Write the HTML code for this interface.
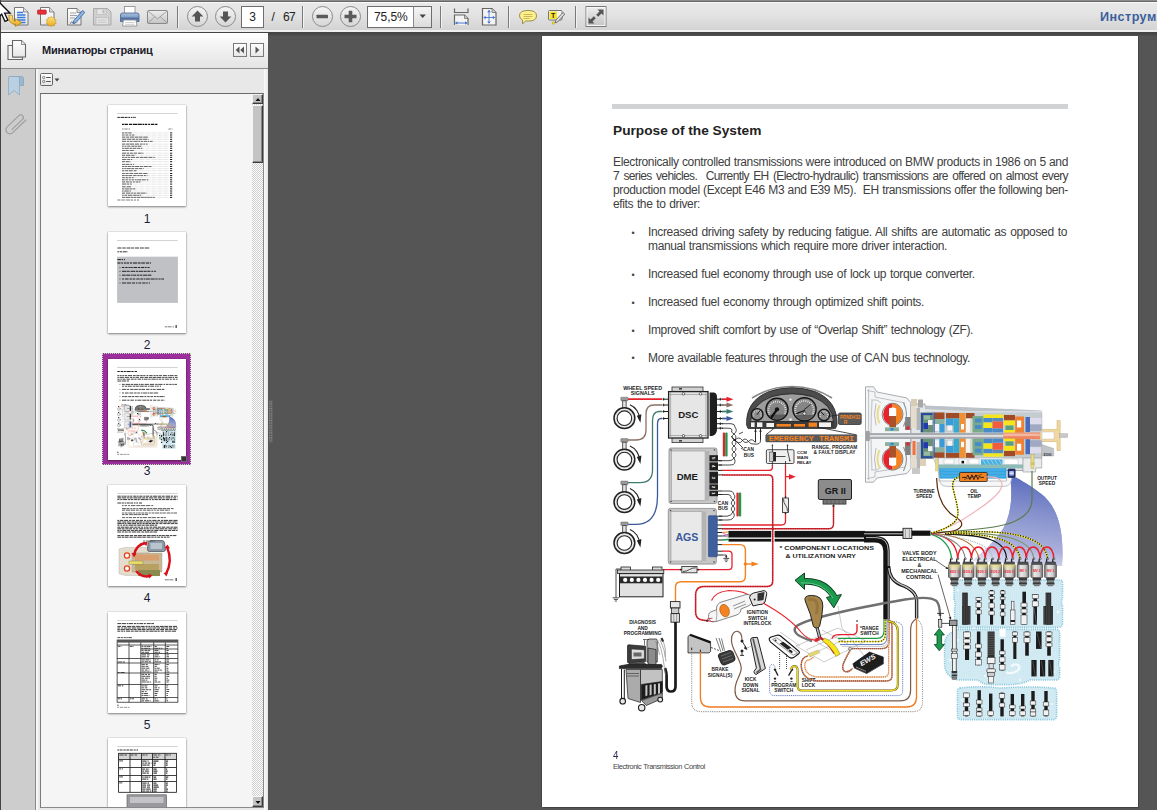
<!DOCTYPE html>
<html lang="ru">
<head>
<meta charset="utf-8">
<title>Electronic Transmission Control</title>
<style>
*{box-sizing:border-box;margin:0;padding:0}
html,body{width:1157px;height:810px;overflow:hidden}
body{position:relative;background:#555;font-family:"Liberation Sans",sans-serif;color:#222}
.abs{position:absolute}
/* toolbar */
#tb{position:absolute;left:0;top:0;width:1157px;height:33px;background:linear-gradient(#e9e9e9 0,#e4e4e4 40%,#d2d2d2 100%);border-top:1px solid #8e8e8e;border-bottom:1px solid #444}
#tb:before{content:"";position:absolute;left:0;top:0;width:100%;height:1px;background:#666}
#tb:after{content:"";position:absolute;left:0;top:1px;width:100%;height:1px;background:#fafafa}
#tbl{position:absolute;left:0;top:29px;width:100%;height:2px;background:#efefef}
.sep{position:absolute;top:5px;width:1px;height:22px;background:#7a7a7a;box-shadow:1px 0 0 #f2f2f2}
.circ{position:absolute;top:5px;width:21px;height:21px;border-radius:50%;border:1px solid #8a8a8a;background:linear-gradient(#f4f4f4,#d6d6d6)}
.inp{position:absolute;background:#fff;border:1px solid #6e6e6e;font-size:12px;line-height:20px;color:#222}
#shadow{position:absolute;left:268px;top:33px;width:889px;height:3px;background:linear-gradient(#444,#505050)}
/* panel */
#ph{position:absolute;left:1px;top:33px;width:267px;height:36px;background:linear-gradient(#fff 0,#f4f4f4 35%,#e4e4e4 100%);border-bottom:1px solid #8c8c8c}
#ledge{position:absolute;left:0;top:0;width:1px;height:810px;background:#444}
#icol{position:absolute;left:1px;top:69px;width:35px;height:741px;background:#cdcdcd;border-right:1px solid #8a8a8a}
#pbody{position:absolute;left:36px;top:69px;width:232px;height:741px;background:#e8e8e8;border-left:2px solid #f6f6f6}
#list{position:absolute;left:40px;top:93px;width:224px;height:715px;background:#f5f5f5;border:1px solid #8a8a8a;border-top-color:#6a6a6a;border-left-color:#7a7a7a;overflow:hidden}
.th{position:absolute;left:67px;width:78px;height:101px;background:#fff;box-shadow:0 1px 2px rgba(0,0,0,.45),0 0 1px rgba(0,0,0,.3)}
.tl{position:absolute;left:86px;width:40px;text-align:center;font-size:12px;line-height:12px;color:#1c1c3a}
.sbb{width:11px;background:#c4c4c4;border-top:1px solid #f4f4f4;border-left:1px solid #f4f4f4;border-right:1px solid #3c3c3c;border-bottom:1px solid #3c3c3c;box-shadow:inset -1px -1px 0 #888}
/* page */
#page{position:absolute;left:542px;top:36px;width:596px;height:771px;background:#fff;box-shadow:-1px 0 0 #444,1px 1px 0 #444}
.t{position:absolute;white-space:nowrap;color:#404040;font-size:12px;line-height:14px;letter-spacing:-0.36px}
.j{text-align:justify;text-align-last:justify;white-space:normal}
</style>
</head>
<body>
<div id="tb"><div id="tbl"></div>
 <div class="sep" style="left:177px"></div>
 <div class="circ" style="left:187px"></div>
 <div class="circ" style="left:215px"></div>
 <div class="inp" style="left:241px;top:5px;width:23px;height:22px;text-align:center">3</div>
 <div class="abs" style="left:271.5px;top:9px;font-size:12px;line-height:14px;color:#222">/</div>
 <div class="abs" style="left:283px;top:9px;font-size:12px;line-height:14px;color:#222;letter-spacing:-0.6px">67</div>
 <div class="sep" style="left:302px"></div>
 <div class="circ" style="left:312px"></div>
 <div class="circ" style="left:340px"></div>
 <div class="inp" style="left:367px;top:5px;width:65px;height:22px;padding-left:6px;letter-spacing:-0.1px">75,5%</div>
 <div class="abs" style="left:413px;top:6px;width:18px;height:20px;border-left:1px solid #8a8a8a;background:linear-gradient(#f4f4f4,#dcdcdc)"></div>
 <div class="sep" style="left:440px"></div>
 <div class="sep" style="left:508px"></div>
 <div class="sep" style="left:575px"></div>
 <div class="abs" style="left:1100px;top:7.5px;font-size:12.6px;line-height:16px;font-weight:bold;color:#3b5f9b;white-space:nowrap;letter-spacing:.45px">Инструменты</div>
</div>
<div id="shadow"></div>
<div id="ledge"></div>
<div id="ph">
 <div class="abs" style="left:41px;top:10px;font-size:11px;line-height:14px;font-weight:bold;color:#1a1a2a;white-space:nowrap;letter-spacing:-0.2px">Миниатюры страниц</div>
</div>
<div id="icol"></div>
<div id="pbody"></div>
<div class="abs" style="left:264px;top:69px;width:4px;height:741px;background:linear-gradient(to right,#fbfbfb,#e6e6e6)"></div>
<svg class="abs" style="left:269px;top:400px" width="4" height="43"><defs><pattern id="gp" width="2" height="2.42" patternUnits="userSpaceOnUse"><rect x=".2" y=".6" width="1.3" height="1.5" fill="#8e8e8e"/></pattern></defs><rect width="3.6" height="42" y=".4" fill="url(#gp)"/></svg>
<div id="list">
<div class="th" style="top:11px"><svg width="78" height="101" viewBox="0 0 78 101" style="display:block"><rect x="9" y="8.2" width="60.8" height=".8" fill="#c8c8c8"/><path d="M9.4,12.4H28" stroke="#222" stroke-width="1" stroke-dasharray="2.5 0.6 3.5 0.5 3.1 0.7 1.7 0.8 1.6 0.7 1.7 0.5 2.8 0.9" opacity="1"/><path d="M14,19.3H49.4" stroke="#111" stroke-width="1.3" stroke-dasharray="1.9 0.6 3.4 1.0 3.2 0.7 4.4 0.5 4.1 0.6 1.9 0.6 2.4 0.9 2.0 0.8 3.4 0.7 3.1 0.5" opacity="1"/><path d="M14,24H22" stroke="#555" stroke-width="0.7" stroke-dasharray="1.7 0.6 3.5 0.7 2.4 0.8" opacity="1"/><path d="M60.5,24H64.5" stroke="#555" stroke-width="0.7" stroke-dasharray="2.9 0.6 3.9 0.8" opacity="1"/><path d="M14,27.9H24.128230280690016" stroke="#333" stroke-width="0.8" stroke-dasharray="2.4 0.7 2.5 0.7 3.3 0.5" opacity="1"/><path d="M14,27.9H61" stroke="#999" stroke-width=".5" stroke-dasharray=".5 .7"/><rect x="62" y="27.4" width="2.2" height="1" fill="#222"/><path d="M14,30.02H26.289014694732906" stroke="#333" stroke-width="0.8" stroke-dasharray="2.5 1.0 2.8 1.0 1.7 0.8 3.9 0.9" opacity="1"/><path d="M14,30.0H61" stroke="#999" stroke-width=".5" stroke-dasharray=".5 .7"/><rect x="62" y="29.5" width="2.2" height="1" fill="#222"/><path d="M14,32.14H40.07767952311514" stroke="#333" stroke-width="0.8" stroke-dasharray="3.3 0.8 2.9 0.9 4.3 0.7 3.5 0.5 3.6 0.8 4.5 0.9" opacity="1"/><path d="M14,32.1H61" stroke="#999" stroke-width=".5" stroke-dasharray=".5 .7"/><rect x="62" y="31.6" width="2.2" height="1" fill="#222"/><path d="M14,34.26H40.63232265435589" stroke="#333" stroke-width="0.8" stroke-dasharray="4.2 0.7 4.3 0.7 3.3 0.7 2.2 0.6 3.7 0.7 4.3 0.7 2.0 0.7" opacity="1"/><path d="M14,34.3H61" stroke="#999" stroke-width=".5" stroke-dasharray=".5 .7"/><rect x="62" y="33.8" width="2.2" height="1" fill="#222"/><path d="M14,36.379999999999995H44.967979487479326" stroke="#333" stroke-width="0.8" stroke-dasharray="4.0 0.9 2.3 0.7 2.6 0.9 4.4 0.6 2.0 0.6 2.2 0.7 3.3 0.6 1.5 0.7 2.6 0.8" opacity="1"/><path d="M14,36.4H61" stroke="#999" stroke-width=".5" stroke-dasharray=".5 .7"/><rect x="62" y="35.9" width="2.2" height="1" fill="#222"/><path d="M14,39.099999999999994H39.952835085535426" stroke="#333" stroke-width="0.8" stroke-dasharray="3.0 0.8 3.5 0.5 4.2 0.9 4.1 0.9 2.7 0.7 1.8 0.8 1.7 0.5" opacity="1"/><path d="M14,39.1H61" stroke="#999" stroke-width=".5" stroke-dasharray=".5 .7"/><rect x="62" y="38.6" width="2.2" height="1" fill="#222"/><path d="M14,41.21999999999999H33.456298576443515" stroke="#333" stroke-width="0.8" stroke-dasharray="1.8 0.8 1.8 0.8 3.1 1.0 3.3 0.5 2.1 0.7 3.4 1.0" opacity="1"/><path d="M14,41.2H61" stroke="#999" stroke-width=".5" stroke-dasharray=".5 .7"/><rect x="62" y="40.7" width="2.2" height="1" fill="#222"/><path d="M14,43.33999999999999H34.32793804402573" stroke="#333" stroke-width="0.8" stroke-dasharray="1.8 0.7 4.4 0.7 2.4 0.6 3.7 0.9 2.9 0.8 3.0 0.6" opacity="1"/><path d="M14,43.3H61" stroke="#999" stroke-width=".5" stroke-dasharray=".5 .7"/><rect x="62" y="42.8" width="2.2" height="1" fill="#222"/><path d="M14,45.45999999999999H25.81166601137636" stroke="#333" stroke-width="0.8" stroke-dasharray="3.1 0.5 3.1 1.0 4.1 0.8" opacity="1"/><path d="M14,45.5H61" stroke="#999" stroke-width=".5" stroke-dasharray=".5 .7"/><rect x="62" y="45.0" width="2.2" height="1" fill="#222"/><path d="M14,48.179999999999986H35.47831828545179" stroke="#333" stroke-width="0.8" stroke-dasharray="4.2 0.7 2.2 0.8 3.0 0.8 3.3 0.9 3.8 0.6 2.2 0.7" opacity="1"/><path d="M14,48.2H61" stroke="#999" stroke-width=".5" stroke-dasharray=".5 .7"/><rect x="62" y="47.7" width="2.2" height="1" fill="#222"/><path d="M14,50.29999999999998H27.197867568273892" stroke="#333" stroke-width="0.8" stroke-dasharray="3.0 0.9 4.5 0.9 2.9 0.6 3.3 0.7" opacity="1"/><path d="M14,50.3H61" stroke="#999" stroke-width=".5" stroke-dasharray=".5 .7"/><rect x="62" y="49.8" width="2.2" height="1" fill="#222"/><path d="M14,52.41999999999998H46.83001641435466" stroke="#333" stroke-width="0.8" stroke-dasharray="2.6 0.6 2.2 0.6 2.1 0.8 4.2 0.9 2.9 0.8 3.9 0.5 3.5 1.0 3.8 0.9 2.9 0.6" opacity="1"/><path d="M14,52.4H61" stroke="#999" stroke-width=".5" stroke-dasharray=".5 .7"/><rect x="62" y="51.9" width="2.2" height="1" fill="#222"/><path d="M14,54.53999999999998H24.25549629942635" stroke="#333" stroke-width="0.8" stroke-dasharray="4.3 0.9 2.9 0.9 1.8 0.6" opacity="1"/><path d="M14,54.5H61" stroke="#999" stroke-width=".5" stroke-dasharray=".5 .7"/><rect x="62" y="54.0" width="2.2" height="1" fill="#222"/><path d="M14,56.659999999999975H22.716270118429644" stroke="#333" stroke-width="0.8" stroke-dasharray="3.3 0.7 3.5 0.8 3.3 0.7" opacity="1"/><path d="M14,56.7H61" stroke="#999" stroke-width=".5" stroke-dasharray=".5 .7"/><rect x="62" y="56.2" width="2.2" height="1" fill="#222"/><path d="M14,59.379999999999974H26.053723069020815" stroke="#333" stroke-width="0.8" stroke-dasharray="3.1 0.5 3.9 0.9 1.8 0.9 1.9 1.0" opacity="1"/><path d="M14,59.4H61" stroke="#999" stroke-width=".5" stroke-dasharray=".5 .7"/><rect x="62" y="58.9" width="2.2" height="1" fill="#222"/><path d="M14,61.49999999999997H43.48003654719575" stroke="#333" stroke-width="0.8" stroke-dasharray="2.1 0.6 2.4 0.6 3.3 0.6 2.8 0.6 4.2 0.7 2.9 0.8 4.2 0.7 4.3 0.8" opacity="1"/><path d="M14,61.5H61" stroke="#999" stroke-width=".5" stroke-dasharray=".5 .7"/><rect x="62" y="61.0" width="2.2" height="1" fill="#222"/><path d="M14,63.61999999999997H35.611171225266325" stroke="#333" stroke-width="0.8" stroke-dasharray="1.6 0.7 2.0 0.5 3.9 0.6 2.9 0.9 3.2 0.7 3.1 0.8 3.9 0.6" opacity="1"/><path d="M14,63.6H61" stroke="#999" stroke-width=".5" stroke-dasharray=".5 .7"/><rect x="62" y="63.1" width="2.2" height="1" fill="#222"/><path d="M14,65.73999999999997H28.46085234712034" stroke="#333" stroke-width="0.8" stroke-dasharray="2.3 0.9 3.0 0.8 3.8 1.0 2.8 0.8" opacity="1"/><path d="M14,65.7H61" stroke="#999" stroke-width=".5" stroke-dasharray=".5 .7"/><rect x="62" y="65.2" width="2.2" height="1" fill="#222"/><path d="M14,68.45999999999997H40.011006066253955" stroke="#333" stroke-width="0.8" stroke-dasharray="2.9 0.8 2.9 1.0 3.6 0.9 4.3 0.6 3.2 1.0 4.0 0.6 1.9 0.7" opacity="1"/><path d="M14,68.5H61" stroke="#999" stroke-width=".5" stroke-dasharray=".5 .7"/><rect x="62" y="68.0" width="2.2" height="1" fill="#222"/><path d="M14,70.57999999999997H39.45004162383532" stroke="#333" stroke-width="0.8" stroke-dasharray="2.8 0.6 2.4 0.6 3.8 1.0 3.4 0.7 2.3 0.6 2.9 0.9 1.8 0.9 2.0 0.8" opacity="1"/><path d="M14,70.6H61" stroke="#999" stroke-width=".5" stroke-dasharray=".5 .7"/><rect x="62" y="70.1" width="2.2" height="1" fill="#222"/><path d="M14,72.69999999999997H26.198117556902858" stroke="#333" stroke-width="0.8" stroke-dasharray="2.8 0.8 2.5 0.6 2.5 0.9 1.6 0.8" opacity="1"/><path d="M14,72.7H61" stroke="#999" stroke-width=".5" stroke-dasharray=".5 .7"/><rect x="62" y="72.2" width="2.2" height="1" fill="#222"/><path d="M14,74.81999999999998H40.28193575494089" stroke="#333" stroke-width="0.8" stroke-dasharray="2.7 0.8 2.4 1.0 1.8 1.0 2.2 0.9 1.8 0.6 4.2 0.6 3.8 0.9 4.0 0.8" opacity="1"/><path d="M14,74.8H61" stroke="#999" stroke-width=".5" stroke-dasharray=".5 .7"/><rect x="62" y="74.3" width="2.2" height="1" fill="#222"/><path d="M14,76.93999999999998H32.55464352580582" stroke="#333" stroke-width="0.8" stroke-dasharray="3.1 0.8 3.0 0.7 2.3 0.9 2.1 0.9 2.3 0.5 1.8 0.6" opacity="1"/><path d="M14,76.9H61" stroke="#999" stroke-width=".5" stroke-dasharray=".5 .7"/><rect x="62" y="76.4" width="2.2" height="1" fill="#222"/><path d="M14,79.05999999999999H23.732185906736" stroke="#333" stroke-width="0.8" stroke-dasharray="4.1 0.7 2.5 0.8 4.3 0.6" opacity="1"/><path d="M14,79.1H61" stroke="#999" stroke-width=".5" stroke-dasharray=".5 .7"/><rect x="62" y="78.6" width="2.2" height="1" fill="#222"/><path d="M14,81.77999999999999H23.123347935824025" stroke="#333" stroke-width="0.8" stroke-dasharray="3.6 1.0 4.4 0.6" opacity="1"/><path d="M14,81.8H61" stroke="#999" stroke-width=".5" stroke-dasharray=".5 .7"/><rect x="62" y="81.3" width="2.2" height="1" fill="#222"/><path d="M14,83.89999999999999H27.245974467981" stroke="#333" stroke-width="0.8" stroke-dasharray="2.4 0.7 3.8 0.6 3.0 0.6 2.5 0.5" opacity="1"/><path d="M14,83.9H61" stroke="#999" stroke-width=".5" stroke-dasharray=".5 .7"/><rect x="62" y="83.4" width="2.2" height="1" fill="#222"/><path d="M14,86.02H22.960683140151193" stroke="#333" stroke-width="0.8" stroke-dasharray="1.6 0.8 4.4 0.8 2.2 0.7" opacity="1"/><path d="M14,86.0H61" stroke="#999" stroke-width=".5" stroke-dasharray=".5 .7"/><rect x="62" y="85.5" width="2.2" height="1" fill="#222"/><path d="M14,88.14H39.06924544923038" stroke="#333" stroke-width="0.8" stroke-dasharray="3.1 0.9 4.4 0.7 2.1 0.6 2.1 0.9 3.7 0.6 4.5 1.0 4.0 0.5" opacity="1"/><path d="M14,88.1H61" stroke="#999" stroke-width=".5" stroke-dasharray=".5 .7"/><rect x="62" y="87.6" width="2.2" height="1" fill="#222"/><path d="M14,90.26H33.19925840381093" stroke="#333" stroke-width="0.8" stroke-dasharray="1.7 0.8 2.6 0.8 4.4 0.8 3.6 0.5 2.1 0.6 1.5 0.7" opacity="1"/><path d="M14,90.3H61" stroke="#999" stroke-width=".5" stroke-dasharray=".5 .7"/><rect x="62" y="89.8" width="2.2" height="1" fill="#222"/><path d="M14,92.38000000000001H47.288197946605784" stroke="#333" stroke-width="0.8" stroke-dasharray="3.1 0.6 4.4 0.7 2.6 0.5 2.6 0.7 3.0 0.6 3.0 0.5 2.3 0.5 2.7 0.5 1.6 0.7 2.2 0.8" opacity="1"/><path d="M14,92.4H61" stroke="#999" stroke-width=".5" stroke-dasharray=".5 .7"/><rect x="62" y="91.9" width="2.2" height="1" fill="#222"/><path d="M9.4,95H31" stroke="#444" stroke-width="0.7" stroke-dasharray="3.1 0.9 3.5 0.9 4.1 0.7 2.5 1.0 1.9 0.9 3.4 0.5" opacity="1"/></svg></div>
<div class="tl" style="top:119px">1</div>
<div class="th" style="top:138px"><svg width="78" height="101" viewBox="0 0 78 101" style="display:block"><rect x="9" y="8.2" width="60.8" height=".8" fill="#c8c8c8"/><path d="M9.4,16H42" stroke="#222" stroke-width="0.9" stroke-dasharray="4.0 0.9 3.4 0.9 3.9 0.6 3.1 0.8 4.0 0.9 4.0 0.8 4.2 0.8 3.6 0.6" opacity="1"/><path d="M9.4,19.8H20" stroke="#222" stroke-width="0.9" stroke-dasharray="1.6 0.6 2.6 0.6 4.0 0.8 3.4 0.8" opacity="1"/><rect x="9.1" y="24.7" width="60.8" height="46.2" fill="#c0c1c5"/><path d="M9.4,27.6H17" stroke="#111" stroke-width="0.9" stroke-dasharray="3.5 0.7 1.5 0.9 3.7 0.8" opacity="1"/><path d="M9.4,31H43" stroke="#111" stroke-width="1" stroke-dasharray="3.1 0.8 1.7 0.9 2.3 0.5 2.3 0.9 2.1 0.9 4.4 0.7 2.6 0.7 3.6 0.9 3.4 0.8 1.7 0.6" opacity="1"/><rect x="11.6" y="35.1" width=".8" height=".8" fill="#111"/><path d="M14,35.5H42" stroke="#111" stroke-width="0.9" stroke-dasharray="2.3 0.9 2.4 0.8 1.5 0.5 2.3 0.8 3.6 0.8 2.4 0.8 2.9 0.7 1.9 0.9 2.1 1.0" opacity="1"/><rect x="11.6" y="38.9" width=".8" height=".8" fill="#111"/><path d="M14,39.3H48" stroke="#111" stroke-width="0.9" stroke-dasharray="4.3 0.5 2.9 0.9 4.4 0.7 2.3 0.6 4.3 0.6 3.2 0.6 3.1 1.0 1.9 0.9 3.0 0.9" opacity="1"/><rect x="11.6" y="42.800000000000004" width=".8" height=".8" fill="#111"/><path d="M14,43.2H44" stroke="#111" stroke-width="0.9" stroke-dasharray="3.6 0.6 4.2 0.7 1.6 0.5 3.0 0.7 2.4 0.6 2.5 0.7 4.0 0.5 3.8 0.9" opacity="1"/><rect x="11.6" y="46.6" width=".8" height=".8" fill="#111"/><path d="M14,47H56" stroke="#111" stroke-width="0.9" stroke-dasharray="1.9 1.0 3.6 1.0 2.4 0.7 2.7 1.0 3.3 0.7 2.8 0.6 1.6 0.6 4.0 0.6 4.3 0.6 2.3 0.8 2.1 0.7 4.4 0.9" opacity="1"/><rect x="11.6" y="50.6" width=".8" height=".8" fill="#111"/><path d="M14,51H42" stroke="#111" stroke-width="0.9" stroke-dasharray="3.9 0.8 4.2 1.0 3.1 0.9 1.6 0.9 2.9 0.9 3.4 0.6 1.6 1.0 1.9 0.7" opacity="1"/><path d="M56.8,94.8H66" stroke="#444" stroke-width="0.7" stroke-dasharray="2.5 0.6 3.7 1.0 2.3 0.8" opacity="1"/><rect x="67.4" y="93" width="1.6" height="3" fill="#666"/></svg></div>
<div class="tl" style="top:245px">2</div>
<div class="abs" style="left:61px;top:259px;width:89px;height:112px;background:#9b2f9b;outline:1px dotted #b8e0b8;outline-offset:-1px"></div>
<div class="th" style="top:265px"><svg width="78" height="101" viewBox="0 0 78 101" style="display:block"><rect x="9" y="8.2" width="60.8" height=".8" fill="#c8c8c8"/><path d="M9.4,12.5H29" stroke="#222" stroke-width="1" stroke-dasharray="2.4 0.8 2.7 0.6 2.0 0.6 4.2 0.7 2.2 1.0 4.5 0.7" opacity="1"/><path d="M9.4,16.6H69.6" stroke="#333" stroke-width="0.9" stroke-dasharray="1.9 0.6 1.8 0.7 1.8 0.6 2.3 0.8 4.2 0.9 2.7 0.7 3.1 0.7 2.5 0.5 2.3 1.0 1.9 0.8 3.4 0.9 2.1 0.6 2.2 0.7 2.8 1.0 4.0 0.9 1.6 0.5 3.6 0.9 2.9 0.8" opacity="1"/><path d="M9.4,18.4H69.6" stroke="#333" stroke-width="0.9" stroke-dasharray="1.5 0.7 4.3 0.9 4.1 1.0 2.2 0.6 2.0 0.8 3.5 1.0 3.7 0.8 3.8 0.7 3.2 0.5 3.8 0.6 4.3 0.8 2.4 0.6 2.3 0.8 3.6 0.6 1.7 0.8 3.2 0.7" opacity="1"/><path d="M9.4,20.2H69.6" stroke="#333" stroke-width="0.9" stroke-dasharray="2.2 0.8 1.5 0.7 2.9 1.0 3.4 0.9 2.9 0.6 2.2 1.0 3.6 0.7 1.6 0.7 3.5 0.7 2.3 0.8 4.3 0.6 1.6 0.7 2.8 0.8 2.1 0.9 3.7 0.8 2.1 1.0 2.4 0.9 2.2 0.6" opacity="1"/><path d="M9.4,22H21" stroke="#333" stroke-width="0.9" stroke-dasharray="3.8 0.6 4.4 0.7 2.1 0.6" opacity="1"/><rect x="11.6" y="25.0" width=".7" height=".7" fill="#111"/><path d="M14,25.4H69.5" stroke="#333" stroke-width="0.9" stroke-dasharray="2.8 0.8 4.3 0.6 2.7 0.6 4.4 0.6 1.7 0.5 2.7 0.9 4.2 0.9 4.5 1.0 2.5 0.6 4.3 0.9 1.6 0.8 2.6 0.7 2.5 0.6 1.5 0.6 2.6 1.0" opacity="1"/><path d="M14,27.2H53" stroke="#333" stroke-width="0.9" stroke-dasharray="1.9 1.0 2.1 0.7 4.0 0.9 2.8 0.5 2.9 0.7 4.3 0.6 2.6 0.9 1.6 0.7 3.9 0.9 1.6 0.5 1.7 1.0 2.3 0.9" opacity="1"/><rect x="11.6" y="30.0" width=".7" height=".7" fill="#111"/><path d="M14,30.4H57" stroke="#333" stroke-width="0.9" stroke-dasharray="4.2 0.7 2.3 1.0 3.4 0.6 3.6 0.7 2.3 0.5 3.8 1.0 3.4 1.0 1.6 0.6 2.9 1.0 4.4 0.7 2.3 0.7 3.0 1.0" opacity="1"/><rect x="11.6" y="33.6" width=".7" height=".7" fill="#111"/><path d="M14,34H51" stroke="#333" stroke-width="0.9" stroke-dasharray="2.0 0.9 3.7 0.9 3.8 0.8 2.5 0.7 2.6 0.9 1.7 0.6 3.8 0.6 1.7 0.5 3.2 0.7 4.4 0.9 4.5 0.6" opacity="1"/><rect x="11.6" y="37.2" width=".7" height=".7" fill="#111"/><path d="M14,37.6H57" stroke="#333" stroke-width="0.9" stroke-dasharray="1.8 0.5 3.0 0.9 2.8 0.6 2.8 0.8 3.5 0.9 4.0 0.8 1.9 0.9 2.4 0.8 2.6 0.9 2.1 0.6 2.2 0.6 4.2 0.8 2.5 0.7" opacity="1"/><rect x="11.6" y="40.800000000000004" width=".7" height=".7" fill="#111"/><path d="M14,41.2H56.6" stroke="#333" stroke-width="0.9" stroke-dasharray="4.5 0.8 2.2 0.9 3.5 1.0 1.8 0.7 4.0 0.9 4.2 0.5 2.4 0.6 2.1 1.0 3.2 1.0 2.6 0.9 2.8 0.6 3.8 1.0" opacity="1"/><use href="#diag" transform="translate(-70.95,-4.72) scale(0.1309)"/><rect x="9.4" y="92.6" width="1" height="1.6" fill="#446"/><path d="M9.4,95.4H21.5" stroke="#555" stroke-width="0.6" stroke-dasharray="1.8 0.8 3.4 0.6 2.6 0.6 2.1 0.6" opacity="1"/></svg></div>
<div class="abs" style="left:140px;top:362px;width:6px;height:6px;background:#333;border:1px solid #666"></div>
<div class="tl" style="top:371px">3</div>
<div class="th" style="top:391px"><svg width="78" height="101" viewBox="0 0 78 101" style="display:block"><rect x="9" y="8.2" width="60.8" height=".8" fill="#c8c8c8"/><path d="M9.4,11.2H69.6" stroke="#222" stroke-width="0.9" stroke-dasharray="3.3 0.8 2.1 0.5 2.5 0.8 2.1 0.7 2.1 0.9 3.1 0.5 1.8 0.7 3.2 0.8 1.8 0.6 3.6 0.7 2.3 0.7 4.4 0.7 3.2 0.7 2.7 0.9 4.5 0.7 2.1 0.9 2.1 0.5 4.2 0.7" opacity="1"/><path d="M9.4,12.9H69.6" stroke="#222" stroke-width="0.9" stroke-dasharray="4.0 0.7 4.1 0.7 2.0 0.5 3.2 0.8 4.2 0.5 3.4 0.7 3.0 0.6 2.3 0.8 4.3 0.6 3.0 0.9 4.4 0.6 1.9 1.0 4.4 0.7 1.7 1.0 2.7 1.0 3.4 0.9" opacity="1"/><path d="M9.4,14.6H69.6" stroke="#222" stroke-width="0.9" stroke-dasharray="2.0 0.9 2.2 0.7 4.0 0.9 2.0 0.6 2.7 0.8 2.7 0.6 2.2 0.9 4.2 0.5 3.2 0.9 1.6 0.9 1.9 0.8 3.2 0.8 2.4 0.7 3.2 0.7 3.5 0.7 2.8 0.5 3.4 0.7 2.2 0.9" opacity="1"/><path d="M9.4,18H34" stroke="#222" stroke-width="0.9" stroke-dasharray="3.8 0.7 2.0 0.7 1.8 0.6 2.8 0.5 2.8 0.8 1.6 0.8 1.7 0.9 3.8 0.8" opacity="1"/><path d="M14,20.6H46" stroke="#333" stroke-width="0.8" stroke-dasharray="1.7 0.8 2.6 1.0 1.9 0.9 4.5 0.9 3.9 0.6 4.4 0.7 4.4 1.0 2.0 0.9" opacity="1"/><path d="M14,23.6H66" stroke="#333" stroke-width="0.8" stroke-dasharray="4.3 0.5 2.6 0.9 2.0 0.9 2.3 0.9 1.9 0.8 4.3 0.6 2.3 0.8 2.5 0.5 2.0 0.6 4.3 0.8 4.2 0.6 3.9 0.6 3.1 0.8 2.6 0.9" opacity="1"/><path d="M14,25.2H62" stroke="#333" stroke-width="0.8" stroke-dasharray="3.2 0.8 4.1 0.6 4.5 0.8 2.7 0.9 2.3 1.0 3.2 0.7 3.8 0.7 2.0 0.9 1.6 0.9 2.3 0.8 4.5 0.8 3.5 0.7 1.5 0.5" opacity="1"/><path d="M14,28H69" stroke="#333" stroke-width="0.8" stroke-dasharray="1.9 0.8 2.8 0.8 4.2 0.6 2.2 0.8 1.6 0.5 2.6 0.6 2.6 0.6 3.3 0.8 2.1 0.8 2.9 0.6 4.3 0.6 1.9 0.5 3.4 0.9 3.8 0.7 2.3 0.5 3.4 0.8" opacity="1"/><path d="M14,29.6H40" stroke="#333" stroke-width="0.8" stroke-dasharray="2.6 0.8 2.8 1.0 3.7 0.6 4.2 0.5 3.1 0.7 2.2 0.5 3.8 0.5" opacity="1"/><path d="M14,32.6H58" stroke="#333" stroke-width="0.8" stroke-dasharray="3.2 1.0 1.9 0.6 3.3 0.8 3.4 0.9 2.0 0.7 2.4 0.5 4.2 0.9 3.6 0.5 4.0 0.9 2.9 0.9 2.9 0.6 1.8 0.6" opacity="1"/><path d="M9.4,35.4H69.6" stroke="#222" stroke-width="0.9" stroke-dasharray="1.6 0.7 3.7 0.8 4.0 0.9 2.3 0.8 2.8 0.9 3.1 0.6 3.4 1.0 2.2 0.9 1.5 0.6 2.2 0.9 4.3 0.9 2.5 0.9 2.5 0.6 4.2 0.8 3.6 0.8 4.4 0.7" opacity="1"/><path d="M9.4,37H69.6" stroke="#222" stroke-width="0.9" stroke-dasharray="4.0 0.8 4.1 0.7 3.7 0.8 2.4 0.6 3.4 0.5 4.2 0.6 1.6 0.6 4.3 0.7 1.9 0.5 1.6 0.8 3.4 0.8 3.7 0.5 3.3 0.7 4.0 0.9 4.2 0.5 4.1 1.0" opacity="1"/><path d="M9.4,38.6H69.6" stroke="#222" stroke-width="0.9" stroke-dasharray="4.3 0.6 2.1 0.6 1.6 0.9 3.9 0.8 4.0 0.8 2.4 0.5 1.8 0.9 2.1 0.7 2.8 0.5 2.3 0.6 3.6 0.7 2.5 1.0 3.0 0.9 3.4 0.5 2.7 0.7 3.8 0.7 3.6 0.8" opacity="1"/><path d="M9.4,40.2H50" stroke="#222" stroke-width="0.9" stroke-dasharray="2.1 0.9 1.8 0.9 2.0 0.5 2.1 0.9 4.4 0.5 3.0 0.7 3.9 0.6 3.0 0.7 4.0 0.6 4.3 0.6 2.1 0.8" opacity="1"/><path d="M9.4,42.2H69.6" stroke="#222" stroke-width="0.9" stroke-dasharray="3.0 0.6 3.4 0.5 3.9 0.8 3.9 0.8 2.6 0.7 2.7 0.9 1.8 0.9 1.6 0.6 2.3 1.0 3.0 0.7 4.2 0.6 2.9 0.8 3.8 0.9 3.4 0.7 2.5 0.6 4.0 0.8" opacity="1"/><path d="M9.4,43.8H69.6" stroke="#222" stroke-width="0.9" stroke-dasharray="3.7 0.6 2.8 0.9 3.2 0.6 2.9 0.9 2.2 0.6 2.4 0.9 4.0 0.6 2.0 0.6 2.5 0.8 2.0 0.7 2.1 1.0 3.7 0.6 4.4 0.6 2.7 1.0 3.9 0.9 2.8 0.6 3.4 0.6" opacity="1"/><path d="M9.4,45.4H69.6" stroke="#222" stroke-width="0.9" stroke-dasharray="2.1 0.7 1.6 0.7 3.9 0.8 3.0 0.8 2.9 0.6 3.3 0.7 3.7 1.0 2.8 0.8 3.7 0.7 2.2 0.9 4.1 0.9 3.6 0.9 3.5 0.8 2.9 0.7 3.4 0.5 2.8 0.9" opacity="1"/><path d="M9.4,47H50" stroke="#222" stroke-width="0.9" stroke-dasharray="3.6 0.8 2.3 0.7 2.9 0.8 2.7 0.8 4.3 0.6 3.5 0.9 2.7 0.7 4.4 0.5 3.1 0.6 3.8 1.0" opacity="1"/><path d="M9.4,50.6H69.4" stroke="#222" stroke-width="0.9" stroke-dasharray="3.1 0.6 3.2 0.8 3.7 0.8 3.4 0.9 3.1 0.7 4.3 0.6 3.6 0.7 3.8 0.6 4.5 0.7 1.7 0.6 2.7 0.5 2.8 0.7 3.6 0.7 2.3 0.6 3.7 1.0 3.1 0.6" opacity="1"/><path d="M9.4,52.2H62" stroke="#222" stroke-width="0.9" stroke-dasharray="3.9 0.7 2.1 0.6 3.8 0.9 3.4 0.7 3.2 0.6 4.4 0.7 3.4 0.9 3.9 0.7 2.4 0.8 1.9 0.9 2.6 0.9 2.3 0.7 2.3 0.7 2.1 0.5 3.7 0.6" opacity="1"/><g><path d="M11,64l6,-1.6h24v28h-24l-6,-1.6z" fill="#e4dccc" stroke="#aaa" stroke-width=".4"/><rect x="24" y="68" width="30" height="19" fill="#c8b898" stroke="#998" stroke-width=".4"/><rect x="27" y="69.5" width="24" height="6" fill="#d8a070"/><rect x="27" y="79" width="24" height="6" fill="#b8a060"/><rect x="30" y="85" width="22" height="6" fill="#8a8a50"/><circle cx="19" cy="70.5" r="2.6" fill="#fff" stroke="#e8401c" stroke-width="1.3"/><circle cx="19" cy="83.5" r="2.6" fill="#fff" stroke="#e8401c" stroke-width="1.3"/><rect x="21" y="76" width="14" height="3.2" fill="#e8dc60" stroke="#776" stroke-width=".4"/><path d="M40,57.5q1,-2 3,-2h11q2,0 2.5,2l1,7q0,2 -2,2h-14q-2,0 -2,-2z" fill="#8a98a8" stroke="#333" stroke-width=".6"/><rect x="42.5" y="58" width="11.5" height="6" fill="#b8c4cc"/><path d="M37,58q-9,2 -11,12" stroke="#d8101c" stroke-width="2.4" fill="none"/><path d="M39.5,56.5l-1,4.5l-4,-3z" fill="#d8101c"/><path d="M23.5,68l2.5,4.5l2.5,-4z" fill="#d8101c"/><path d="M59,62q6,14 -1,27" stroke="#d8101c" stroke-width="2.4" fill="none"/><path d="M56.5,63l3,-3.5l2.5,4z" fill="#d8101c"/><path d="M55.5,88l4.5,-1l-1.5,4.5z" fill="#d8101c"/><path d="M28,86q6,7 14,5" stroke="#d8101c" stroke-width="2.4" fill="none"/><path d="M40.5,88.5l4,2l-3.5,3z" fill="#d8101c"/><path d="M35,56H47" stroke="#333" stroke-width="0.7" stroke-dasharray="2.2 0.7 2.9 0.7 3.4 0.8 2.6 1.0" opacity="1"/></g><path d="M56.8,94.8H66" stroke="#444" stroke-width="0.7" stroke-dasharray="4.1 0.5 4.0 1.0" opacity="1"/><rect x="67.4" y="93" width="1.6" height="3" fill="#666"/></svg></div>
<div class="tl" style="top:498px">4</div>
<div class="th" style="top:518px"><svg width="78" height="101" viewBox="0 0 78 101" style="display:block"><rect x="9" y="8.2" width="60.8" height=".8" fill="#c8c8c8"/><path d="M9.4,11.6H46" stroke="#222" stroke-width="0.9" stroke-dasharray="3.9 0.6 4.0 0.8 1.5 0.5 4.4 0.8 2.3 0.6 1.9 0.6 3.8 0.7 2.0 1.0 3.9 0.6 4.2 0.8" opacity="1"/><path d="M9.4,14.4H69.6" stroke="#222" stroke-width="0.9" stroke-dasharray="3.8 0.8 4.2 0.9 4.0 0.6 3.6 0.8 3.7 0.7 4.1 0.8 2.3 0.6 1.9 0.7 1.7 0.7 1.9 0.7 3.0 0.8 4.1 0.5 4.0 0.7 3.2 0.8 4.0 0.7" opacity="1"/><path d="M9.4,16H69.6" stroke="#222" stroke-width="0.9" stroke-dasharray="2.8 1.0 1.7 0.8 3.4 0.5 3.3 0.8 4.3 0.7 4.4 0.8 3.0 0.9 1.6 0.9 3.4 0.7 4.1 0.7 2.9 0.8 3.8 0.6 2.8 0.7 3.2 0.9 2.4 0.9 2.7 0.8" opacity="1"/><path d="M9.4,17.6H69.6" stroke="#222" stroke-width="0.9" stroke-dasharray="2.3 0.8 4.4 0.8 3.9 0.7 2.5 0.6 3.3 0.8 3.9 0.5 3.7 0.9 3.1 0.5 2.4 0.5 2.1 1.0 3.3 0.8 3.9 1.0 3.3 0.8 3.4 0.8 3.3 0.8 2.1 0.8" opacity="1"/><path d="M9.4,19.2H68" stroke="#222" stroke-width="0.9" stroke-dasharray="2.9 0.9 1.8 0.6 1.6 0.9 4.2 0.8 2.6 0.9 3.9 0.8 2.3 0.7 2.8 0.7 2.8 0.8 4.3 0.5 3.2 0.5 1.9 0.9 3.2 1.0 2.8 0.5 2.7 0.8 4.3 1.0" opacity="1"/><path d="M9.4,25.6H24" stroke="#222" stroke-width="0.8" stroke-dasharray="2.9 0.7 1.8 0.8 2.1 0.6 1.5 0.5 3.6 0.6" opacity="1"/><g stroke="#111" stroke-width=".7" fill="none"><rect x="9.1" y="28" width="60.8" height="62.2"/><path d="M21,28V90.2"/><path d="M32.8,28V90.2"/><path d="M45.7,28V90.2"/><path d="M57.3,28V90.2"/><path d="M9.1,33H69.9"/><path d="M32.8,37H69.9"/><path d="M32.8,41.5H69.9"/><path d="M9.1,46.5H69.9"/><path d="M9.1,51H69.9"/><path d="M9.1,61H69.9"/><path d="M9.1,72.5H69.9"/><path d="M9.1,85.5H69.9"/></g><rect x="9.1" y="28" width="60.8" height="2.6" fill="#555"/><path d="M33.6,34.4H43.43174226650845" stroke="#222" stroke-width="0.8" stroke-dasharray="1.8 0.9 1.9 0.5 3.7 0.6 3.7 0.6" opacity="1"/><path d="M46.6,34.4H48.90083224322827" stroke="#222" stroke-width="0.8" stroke-dasharray="3.8 0.9" opacity="1"/><rect x="58.4" y="34.0" width="2.7" height=".8" fill="#222"/><path d="M33.6,36.3H42.248608876740505" stroke="#222" stroke-width="0.8" stroke-dasharray="1.8 0.8 3.6 0.7 4.3 0.6" opacity="1"/><path d="M46.6,36.3H54.38589248892639" stroke="#222" stroke-width="0.8" stroke-dasharray="3.7 0.5 1.5 0.8 4.0 0.5" opacity="1"/><rect x="58.4" y="35.9" width="1.6" height=".8" fill="#222"/><path d="M33.6,38.4H42.24720961451975" stroke="#222" stroke-width="0.8" stroke-dasharray="2.0 0.9 3.0 0.5 2.6 0.8" opacity="1"/><path d="M46.6,38.4H51.23234247877309" stroke="#222" stroke-width="0.8" stroke-dasharray="3.5 0.6 3.9 0.7" opacity="1"/><rect x="58.4" y="38.0" width="2.3" height=".8" fill="#222"/><path d="M33.6,40.3H41.748533694514954" stroke="#222" stroke-width="0.8" stroke-dasharray="2.8 0.7 3.9 1.0" opacity="1"/><path d="M46.6,40.3H53.30774525797828" stroke="#222" stroke-width="0.8" stroke-dasharray="3.2 0.6 1.7 1.0 3.6 0.9" opacity="1"/><rect x="58.4" y="39.9" width="1.7" height=".8" fill="#222"/><path d="M33.6,42.9H41.6291151153188" stroke="#222" stroke-width="0.8" stroke-dasharray="4.4 0.9 3.3 0.7" opacity="1"/><path d="M46.6,42.9H51.17137119664494" stroke="#222" stroke-width="0.8" stroke-dasharray="4.2 0.7" opacity="1"/><rect x="58.4" y="42.5" width="2.4" height=".8" fill="#222"/><path d="M33.6,44.8H41.608910409042444" stroke="#222" stroke-width="0.8" stroke-dasharray="4.2 0.9 2.3 0.5 2.3 0.7" opacity="1"/><path d="M46.6,44.8H52.119858103421166" stroke="#222" stroke-width="0.8" stroke-dasharray="3.9 0.9 1.6 0.9" opacity="1"/><rect x="58.4" y="44.4" width="2.6" height=".8" fill="#222"/><path d="M33.6,47.9H42.93602578911319" stroke="#222" stroke-width="0.8" stroke-dasharray="3.2 0.6 4.1 0.9 3.6 1.0" opacity="1"/><path d="M46.6,47.9H50.681119471843125" stroke="#222" stroke-width="0.8" stroke-dasharray="1.8 0.8 3.9 0.6" opacity="1"/><rect x="58.4" y="47.5" width="2.5" height=".8" fill="#222"/><path d="M33.6,49.8H43.25861365133064" stroke="#222" stroke-width="0.8" stroke-dasharray="2.2 0.8 3.5 0.7 2.1 0.6" opacity="1"/><path d="M46.6,49.8H53.10680145663186" stroke="#222" stroke-width="0.8" stroke-dasharray="3.9 0.7 1.8 0.9" opacity="1"/><rect x="58.4" y="49.4" width="2.5" height=".8" fill="#222"/><path d="M33.6,52.4H39.76433215879599" stroke="#222" stroke-width="0.8" stroke-dasharray="3.2 0.9 4.2 0.8" opacity="1"/><path d="M46.6,52.4H51.45951735851923" stroke="#222" stroke-width="0.8" stroke-dasharray="3.3 0.6 2.1 0.6" opacity="1"/><rect x="58.4" y="52.0" width="2.4" height=".8" fill="#222"/><path d="M33.6,54.3H40.414128852556125" stroke="#222" stroke-width="0.8" stroke-dasharray="3.2 0.7 3.1 0.6" opacity="1"/><path d="M46.6,54.3H48.86756675195477" stroke="#222" stroke-width="0.8" stroke-dasharray="4.5 0.7" opacity="1"/><rect x="58.4" y="53.9" width="1.2" height=".8" fill="#222"/><path d="M33.6,56.199999999999996H41.7637123027233" stroke="#222" stroke-width="0.8" stroke-dasharray="3.9 0.6 3.3 0.7" opacity="1"/><path d="M46.6,56.199999999999996H51.71674089463666" stroke="#222" stroke-width="0.8" stroke-dasharray="1.6 0.5 4.5 0.9" opacity="1"/><rect x="58.4" y="55.8" width="2.0" height=".8" fill="#222"/><path d="M33.6,58.099999999999994H41.43591975322303" stroke="#222" stroke-width="0.8" stroke-dasharray="2.3 0.9 2.8 1.0 3.8 0.9" opacity="1"/><path d="M46.6,58.099999999999994H54.38080921460258" stroke="#222" stroke-width="0.8" stroke-dasharray="2.3 0.5 2.1 0.6 1.8 0.5 3.2 0.9" opacity="1"/><rect x="58.4" y="57.7" width="1.9" height=".8" fill="#222"/><path d="M33.6,59.99999999999999H43.336025327652905" stroke="#222" stroke-width="0.8" stroke-dasharray="4.2 0.5 3.3 0.7 1.9 1.0" opacity="1"/><path d="M46.6,59.99999999999999H50.143162211122096" stroke="#222" stroke-width="0.8" stroke-dasharray="3.2 0.8" opacity="1"/><rect x="58.4" y="59.6" width="2.9" height=".8" fill="#222"/><path d="M33.6,62.4H41.94860743978996" stroke="#222" stroke-width="0.8" stroke-dasharray="2.7 0.7 2.0 1.0 4.5 0.6" opacity="1"/><path d="M46.6,62.4H48.831790018456296" stroke="#222" stroke-width="0.8" stroke-dasharray="2.3 0.7" opacity="1"/><rect x="58.4" y="62.0" width="2.8" height=".8" fill="#222"/><path d="M33.6,64.3H43.12286135508813" stroke="#222" stroke-width="0.8" stroke-dasharray="4.0 0.5 3.9 0.9 3.4 1.0" opacity="1"/><path d="M46.6,64.3H48.93460687552646" stroke="#222" stroke-width="0.8" stroke-dasharray="1.9 0.9" opacity="1"/><rect x="58.4" y="63.9" width="2.9" height=".8" fill="#222"/><path d="M33.6,66.2H41.98444585905311" stroke="#222" stroke-width="0.8" stroke-dasharray="2.4 0.8 3.8 0.6 2.5 0.6" opacity="1"/><path d="M46.6,66.2H49.34486139602884" stroke="#222" stroke-width="0.8" stroke-dasharray="2.9 0.6" opacity="1"/><rect x="58.4" y="65.8" width="1.5" height=".8" fill="#222"/><path d="M33.6,68.10000000000001H39.31574654110888" stroke="#222" stroke-width="0.8" stroke-dasharray="3.5 0.5 3.7 0.6" opacity="1"/><path d="M46.6,68.10000000000001H48.816075501901935" stroke="#222" stroke-width="0.8" stroke-dasharray="4.3 0.6" opacity="1"/><rect x="58.4" y="67.7" width="2.9" height=".8" fill="#222"/><path d="M33.6,70.00000000000001H42.93375978369622" stroke="#222" stroke-width="0.8" stroke-dasharray="4.2 0.6 2.8 0.5 4.3 0.9" opacity="1"/><path d="M46.6,70.00000000000001H52.37022385933194" stroke="#222" stroke-width="0.8" stroke-dasharray="2.9 0.7 4.0 0.7" opacity="1"/><rect x="58.4" y="69.6" width="2.3" height=".8" fill="#222"/><path d="M33.6,73.9H39.3138394315533" stroke="#222" stroke-width="0.8" stroke-dasharray="2.2 0.5 3.6 0.8" opacity="1"/><path d="M46.6,73.9H49.46826572294404" stroke="#222" stroke-width="0.8" stroke-dasharray="4.1 0.6" opacity="1"/><rect x="58.4" y="73.5" width="1.8" height=".8" fill="#222"/><path d="M33.6,75.80000000000001H39.37843230312392" stroke="#222" stroke-width="0.8" stroke-dasharray="2.3 0.9 2.5 0.6" opacity="1"/><path d="M46.6,75.80000000000001H51.54604160379937" stroke="#222" stroke-width="0.8" stroke-dasharray="2.5 1.0 1.8 1.0" opacity="1"/><rect x="58.4" y="75.4" width="1.1" height=".8" fill="#222"/><path d="M33.6,77.70000000000002H43.07518798662739" stroke="#222" stroke-width="0.8" stroke-dasharray="3.5 0.6 2.9 0.6 2.3 0.6" opacity="1"/><path d="M46.6,77.70000000000002H50.785679708364285" stroke="#222" stroke-width="0.8" stroke-dasharray="4.5 1.0" opacity="1"/><rect x="58.4" y="77.3" width="2.9" height=".8" fill="#222"/><path d="M33.6,79.60000000000002H39.08782424592023" stroke="#222" stroke-width="0.8" stroke-dasharray="2.4 0.9 1.7 0.9" opacity="1"/><path d="M46.6,79.60000000000002H50.361146536961996" stroke="#222" stroke-width="0.8" stroke-dasharray="4.4 0.5" opacity="1"/><rect x="58.4" y="79.2" width="2.6" height=".8" fill="#222"/><path d="M33.6,81.50000000000003H40.30452980364801" stroke="#222" stroke-width="0.8" stroke-dasharray="1.9 0.5 4.0 0.8" opacity="1"/><path d="M46.6,81.50000000000003H49.71492376149144" stroke="#222" stroke-width="0.8" stroke-dasharray="2.8 1.0" opacity="1"/><rect x="58.4" y="81.1" width="1.4" height=".8" fill="#222"/><path d="M33.6,83.40000000000003H41.45669923501784" stroke="#222" stroke-width="0.8" stroke-dasharray="1.9 0.6 3.8 0.9 2.1 0.5" opacity="1"/><path d="M46.6,83.40000000000003H49.12452608448231" stroke="#222" stroke-width="0.8" stroke-dasharray="3.3 0.7" opacity="1"/><rect x="58.4" y="83.0" width="1.5" height=".8" fill="#222"/><path d="M33.6,86.9H39.63015956048075" stroke="#222" stroke-width="0.8" stroke-dasharray="3.3 0.9 3.9 0.8" opacity="1"/><path d="M46.6,86.9H49.81374504313035" stroke="#222" stroke-width="0.8" stroke-dasharray="1.7 0.9 2.7 0.9" opacity="1"/><rect x="58.4" y="86.5" width="1.1" height=".8" fill="#222"/><path d="M33.6,88.80000000000001H42.65323577477192" stroke="#222" stroke-width="0.8" stroke-dasharray="2.5 0.9 4.1 0.7 1.5 1.0" opacity="1"/><path d="M46.6,88.80000000000001H51.459686052796926" stroke="#222" stroke-width="0.8" stroke-dasharray="4.1 0.6 2.1 0.9" opacity="1"/><rect x="58.4" y="88.4" width="1.7" height=".8" fill="#222"/><path d="M9.9,34.4H13.717440401846813" stroke="#222" stroke-width="0.8" stroke-dasharray="2.6 0.8 1.5 0.8" opacity="1"/><path d="M21.8,34.4H26" stroke="#222" stroke-width="0.8" stroke-dasharray="2.8 0.8 1.9 0.9" opacity="1"/><path d="M9.9,50H16.982677618788376" stroke="#222" stroke-width="0.8" stroke-dasharray="4.1 0.7 3.6 0.7" opacity="1"/><path d="M9.9,60.5H16.656580050961765" stroke="#222" stroke-width="0.8" stroke-dasharray="1.7 0.9 4.4 0.7" opacity="1"/><path d="M9.9,73.8H15.4665703425423" stroke="#222" stroke-width="0.8" stroke-dasharray="3.1 0.8 1.6 1.0" opacity="1"/><path d="M9.9,86.8H14.0184949285939" stroke="#222" stroke-width="0.8" stroke-dasharray="2.0 0.6 2.3 0.9" opacity="1"/><path d="M21.8,86.8H26" stroke="#222" stroke-width="0.8" stroke-dasharray="1.6 0.5 3.6 0.6" opacity="1"/><rect x="9.4" y="92.6" width="1" height="1.6" fill="#446"/><path d="M9.4,95.4H21.5" stroke="#555" stroke-width="0.6" stroke-dasharray="1.6 0.8 3.2 0.8 3.6 0.6 4.1 0.9" opacity="1"/></svg></div>
<div class="tl" style="top:625px">5</div>
<div class="th" style="top:644px"><svg width="78" height="101" viewBox="0 0 78 101" style="display:block"><rect x="9" y="8.2" width="60.8" height=".8" fill="#c8c8c8"/><path d="M9.4,12H30" stroke="#222" stroke-width="0.9" stroke-dasharray="1.6 0.6 3.0 0.8 2.3 0.6 2.7 0.6 3.3 0.9 1.9 0.8 3.7 0.6" opacity="1"/><rect x="10.6" y="15.3" width="57.8" height="6.2" fill="#d4d4d4"/><g stroke="#111" stroke-width=".8" fill="none"><rect x="10.6" y="15.3" width="57.8" height="39"/><path d="M22,15.3V54.3"/><path d="M33.5,15.3V54.3"/><path d="M44.5,15.3V54.3"/><path d="M57,15.3V54.3"/><path d="M10.6,21.5H68.4"/><path d="M10.6,29.5H68.4"/><path d="M10.6,37.5H68.4"/><path d="M10.6,43.5H68.4"/></g><path d="M11.4,17H18.904055333689115" stroke="#222" stroke-width="0.8" stroke-dasharray="4.3 0.7 2.8 0.9" opacity="1"/><path d="M22.8,17H29.10246169675014" stroke="#222" stroke-width="0.8" stroke-dasharray="2.7 1.0 3.8 0.7" opacity="1"/><path d="M34.3,17H39.4615083586743" stroke="#222" stroke-width="0.8" stroke-dasharray="2.5 0.7 4.4 0.9" opacity="1"/><path d="M45.3,17H53.151083329934764" stroke="#222" stroke-width="0.8" stroke-dasharray="3.9 0.9 1.7 0.8 4.4 1.0" opacity="1"/><path d="M57.8,17H62.99713778109839" stroke="#222" stroke-width="0.8" stroke-dasharray="2.8 0.8 2.6 0.8" opacity="1"/><path d="M45.2,19.2H51" stroke="#222" stroke-width="0.8" stroke-dasharray="1.7 0.7 3.0 0.5" opacity="1"/><path d="M34.2,23.1H40.701864116747835" stroke="#111" stroke-width="0.9" stroke-dasharray="4.4 0.9 4.3 0.8" opacity="1"/><rect x="45.4" y="22.6" width="5.1" height="1" fill="#111"/><rect x="57.8" y="22.6" width="2.3" height="1" fill="#111"/><path d="M34.2,25.1H43.384712023622996" stroke="#111" stroke-width="0.9" stroke-dasharray="1.6 0.8 2.3 0.8 2.3 0.8 4.3 0.8" opacity="1"/><rect x="45.4" y="24.6" width="2.6" height="1" fill="#111"/><rect x="57.8" y="24.6" width="1.8" height="1" fill="#111"/><path d="M34.2,27.1H41.76128858068547" stroke="#111" stroke-width="0.9" stroke-dasharray="4.4 0.6 2.4 0.8" opacity="1"/><rect x="45.4" y="26.6" width="2.0" height="1" fill="#111"/><rect x="57.8" y="26.6" width="1.9" height="1" fill="#111"/><path d="M11.2,22.9H15" stroke="#222" stroke-width="0.8" stroke-dasharray="4.4 0.8" opacity="1"/><path d="M34.2,31.1H41.16628149080356" stroke="#111" stroke-width="0.9" stroke-dasharray="2.9 0.8 1.9 0.6 1.9 0.6" opacity="1"/><rect x="45.4" y="30.6" width="3.3" height="1" fill="#111"/><rect x="57.8" y="30.6" width="1.4" height="1" fill="#111"/><path d="M34.2,33.1H41.076242487500245" stroke="#111" stroke-width="0.9" stroke-dasharray="1.8 0.8 4.0 0.8" opacity="1"/><rect x="45.4" y="32.6" width="4.1" height="1" fill="#111"/><rect x="57.8" y="32.6" width="2.0" height="1" fill="#111"/><path d="M34.2,35.1H40.924290701559684" stroke="#111" stroke-width="0.9" stroke-dasharray="3.6 0.7 3.1 0.8" opacity="1"/><rect x="45.4" y="34.6" width="3.6" height="1" fill="#111"/><rect x="57.8" y="34.6" width="1.5" height="1" fill="#111"/><path d="M11.2,30.9H15" stroke="#222" stroke-width="0.8" stroke-dasharray="2.2 0.6 3.0 0.7" opacity="1"/><path d="M34.2,39.1H42.30845994820622" stroke="#111" stroke-width="0.9" stroke-dasharray="1.5 0.7 4.1 0.6 3.2 0.7" opacity="1"/><rect x="45.4" y="38.6" width="2.8" height="1" fill="#111"/><rect x="57.8" y="38.6" width="2.5" height="1" fill="#111"/><path d="M34.2,41.1H41.263815327024965" stroke="#111" stroke-width="0.9" stroke-dasharray="3.8 0.6 1.7 0.9 2.8 0.5" opacity="1"/><rect x="45.4" y="40.6" width="3.2" height="1" fill="#111"/><rect x="57.8" y="40.6" width="1.7" height="1" fill="#111"/><path d="M11.2,38.9H15" stroke="#222" stroke-width="0.8" stroke-dasharray="3.7 0.6" opacity="1"/><path d="M34.2,45.1H41.010601409982925" stroke="#111" stroke-width="0.9" stroke-dasharray="4.4 0.9 2.0 0.7" opacity="1"/><rect x="45.4" y="44.6" width="3.1" height="1" fill="#111"/><rect x="57.8" y="44.6" width="2.0" height="1" fill="#111"/><path d="M34.2,47.1H42.418667872240576" stroke="#111" stroke-width="0.9" stroke-dasharray="4.0 0.9 3.1 0.9" opacity="1"/><rect x="45.4" y="46.6" width="4.8" height="1" fill="#111"/><rect x="57.8" y="46.6" width="2.1" height="1" fill="#111"/><path d="M34.2,49.1H41.910858292633726" stroke="#111" stroke-width="0.9" stroke-dasharray="3.9 0.9 4.2 0.6" opacity="1"/><rect x="45.4" y="48.6" width="5.4" height="1" fill="#111"/><rect x="57.8" y="48.6" width="1.0" height="1" fill="#111"/><path d="M34.2,51.1H42.95643854722237" stroke="#111" stroke-width="0.9" stroke-dasharray="3.3 0.7 4.4 0.8" opacity="1"/><rect x="45.4" y="50.6" width="3.4" height="1" fill="#111"/><rect x="57.8" y="50.6" width="2.2" height="1" fill="#111"/><path d="M34.2,53.1H43.34194059548556" stroke="#111" stroke-width="0.9" stroke-dasharray="3.3 0.7 2.9 0.7 3.7 0.6" opacity="1"/><rect x="45.4" y="52.6" width="3.3" height="1" fill="#111"/><rect x="57.8" y="52.6" width="1.8" height="1" fill="#111"/><path d="M11.2,44.9H15" stroke="#222" stroke-width="0.8" stroke-dasharray="2.7 0.7 3.9 0.9" opacity="1"/><rect x="19" y="56.8" width="39.5" height="30" fill="#9a9a9e" stroke="#555" stroke-width=".6"/><rect x="22" y="59" width="33.5" height="6" fill="#c4c4c8"/></svg></div>
<div class="abs" style="left:211px;top:0;width:11px;height:713px;background:repeating-conic-gradient(#fdfdfd 0 25%,#cfcfcf 0 50%) 0 0/2px 2px"></div>
<div class="abs sbb" style="left:211px;top:0;height:10px"><svg width="11" height="10" style="display:block"><path d="M2.5,6h5l-2.5,-3z" fill="#111"/></svg></div>
<div class="abs sbb" style="left:211px;top:11px;height:58px"></div>
<div class="abs sbb" style="left:211px;top:702px;height:11px"><svg width="11" height="11" style="display:block"><path d="M2.5,4h5l-2.5,3z" fill="#111"/></svg></div>

</div>
<div id="page">
 <div class="abs" style="left:70px;top:68px;width:456px;height:5px;background:#d1d2d4"></div>
<div class="abs" id="h1" style="left:71px;top:86px;font-size:13.7px;line-height:18px;font-weight:bold;color:#222;white-space:nowrap;letter-spacing:0px">Purpose of the System</div>
<div class="t j" style="left:71px;top:119.2px;width:455px">Electronically controlled transmissions were introduced on BMW products in 1986 on 5 and</div>
<div class="t j" style="left:71px;top:133.1px;width:455px;letter-spacing:-0.62px">7 series vehicles.&nbsp; Currently EH (Electro-hydraulic) transmissions are offered on almost every</div>
<div class="t j" style="left:71px;top:146.9px;width:455px">production model (Except E46 M3 and E39 M5).&nbsp; EH transmissions offer the following ben-</div>
<div class="t j" style="left:71px;top:160.8px;width:87px">efits the to driver:</div>
<div class="t j" style="left:106px;top:189.2px;width:419px">Increased driving safety by reducing fatigue. All shifts are automatic as opposed to</div>
<div class="t j" style="left:106px;top:203.1px;width:299px">manual transmissions which require more driver interaction.</div>
<div class="t j" style="left:106px;top:231.3px;width:326.7px">Increased fuel economy through use of lock up torque converter.</div>
<div class="t j" style="left:106px;top:259.3px;width:276px">Increased fuel economy through optimized shift points.</div>
<div class="t j" style="left:106px;top:286.9px;width:325px">Improved shift comfort by use of “Overlap Shift” technology (ZF).</div>
<div class="t j" style="left:106px;top:314.7px;width:322px">More available features through the use of CAN bus technology.</div>
<div class="t" style="left:89.6px;top:189.8px;font-size:9px">•</div>
<div class="t" style="left:89.6px;top:231.9px;font-size:9px">•</div>
<div class="t" style="left:89.6px;top:259.9px;font-size:9px">•</div>
<div class="t" style="left:89.6px;top:287.5px;font-size:9px">•</div>
<div class="t" style="left:89.6px;top:315.3px;font-size:9px">•</div>
<div class="t" id="pn" style="left:71px;top:712px;font-size:11.5px;letter-spacing:0;color:#2a2a55;transform:scaleX(.84);transform-origin:0 0">4</div>
<div class="t j" id="ft" style="left:71px;top:724px;width:92px;font-size:7.4px;letter-spacing:-0.41px;color:#444">Electronic Transmission Control</div>
</div>
<svg class="abs" style="left:0;top:0" width="1157" height="810" viewBox="0 0 1157 810" font-family="Liberation Sans, sans-serif" font-weight="bold" text-anchor="middle">
<defs>
 <g id="ws">
  <rect x="-3.6" y="-21" width="7.2" height="3.6" rx=".6" fill="#9a9a9a" stroke="#666" stroke-width=".5"/>
  <rect x="-1.7" y="-17.4" width="3.4" height="8" fill="#e4e4e4" stroke="#333" stroke-width=".8"/>
  <circle r="10.4" fill="#e9e9e9" stroke="#222" stroke-width="1.5"/>
  <circle r="7.3" fill="#fff" stroke="#222" stroke-width="1.1"/>
  <path d="M5.5,-13.5 A15,15 0 0 1 15,1" fill="none" stroke="#222" stroke-width="1.1"/>
  <path d="M12.4,-2.5 L17,-4 L16,4.5z" fill="#222"/>
 </g>
 <g id="pinL"><path d="M0,0h6M1.2,-1.3v2.6" stroke="#222" stroke-width="1" fill="none"/></g>
</defs>
<g id="diag">
<!-- ===== left column ===== -->
<g font-size="5.35" fill="#222"><text x="642.6" y="389.5">WHEEL SPEED</text><text x="642.6" y="395.3">SIGNALS</text></g>
<!-- sensor wires -->
<path d="M628,399.2H662" stroke="#e8222c" stroke-width="1.8" fill="none"/>
<path d="M628,440H636Q646,440 646,430V414Q646,405 654,405H662" stroke="#8c7468" stroke-width="1.3" fill="none"/>
<path d="M628,482.6H640Q652.5,482.6 652.5,470V421Q652.5,411.5 659,411.5H662" stroke="#3f7c72" stroke-width="1.3" fill="none"/>
<path d="M628,524.3H636Q657.5,524.3 657.5,496V424Q657.5,418.5 661,418.5H662" stroke="#3c5a9c" stroke-width="1.3" fill="none"/>
<use href="#ws" x="624.4" y="418.2"/><use href="#ws" x="624.4" y="459.6"/><use href="#ws" x="624.4" y="502.1"/><use href="#ws" x="624.4" y="543"/>
<!-- DSC -->
<use href="#pinL" x="662.5" y="399.2"/><use href="#pinL" x="662.5" y="405"/><use href="#pinL" x="662.5" y="411.5"/><use href="#pinL" x="662.5" y="418.5"/>
<rect x="672" y="387" width="31" height="6" fill="#d2d2d2" stroke="#333" stroke-width=".8"/>
<rect x="672" y="437" width="31" height="5.6" fill="#d2d2d2" stroke="#333" stroke-width=".8"/>
<rect x="679" y="388" width="3" height="1.6" fill="#444"/><rect x="679" y="440" width="3" height="1.6" fill="#444"/>
<rect x="668.6" y="391.6" width="39.4" height="46.4" fill="#e6e6e6" stroke="#222" stroke-width="1.3"/>
<path d="M670.6,392v46M706,392v46M669,394.5h39M669,435.5h39" stroke="#888" stroke-width=".6" fill="none"/>
<g fill="#eee" stroke="#222" stroke-width=".6"><circle cx="683.5" cy="393.8" r="1.3"/><circle cx="700.5" cy="393.8" r="1.3"/><circle cx="683.5" cy="435.8" r="1.3"/><circle cx="700.5" cy="435.8" r="1.3"/></g>
<path d="M709.6,392.5H714Q717,393 717,397V430Q716.5,435 712,436H709.6z" fill="#1e1e1e"/>
<text x="688.3" y="417.9" font-size="9.6" fill="#1a1a1a">DSC</text>
<g stroke="#222" stroke-width="1" fill="none"><path d="M717,399.2h6M720.3,397.9v2.6M717,405h6M720.3,403.7v2.6M717,411.5h6M720.3,410.2v2.6M717,418.5h6M720.3,417.2v2.6M717,423.7h6M720.3,422.4v2.6M717,428.2h6M720.3,426.9v2.6"/></g>
<g stroke-width="1.7" fill="none"><path d="M722,399.2h6" stroke="#e8222c"/><path d="M722,405h6" stroke="#8c7468"/><path d="M722,411.5h6" stroke="#3f7c72"/><path d="M722,418.5h6" stroke="#3c5a9c"/></g>
<path d="M726.5,396.7L733.5,399.2L726.5,401.7z" fill="#e8222c"/><path d="M726.5,402.5L733.5,405L726.5,407.5z" fill="#8c7468"/><path d="M726.5,409L733.5,411.5L726.5,414z" fill="#3f7c72"/><path d="M726.5,416L733.5,418.5L726.5,421z" fill="#3c5a9c"/>
<!-- CAN twisted pairs DSC->DME -->
<g stroke="#222" stroke-width=".8" fill="none">
 <path d="M722,423.7H731Q735,423.7 735,427 Q738,431 734,434 Q730,437 734,440 Q738,443 734,446 Q730,449 734,452 Q738,455 734,458 Q733,460.7 729,460.7H719"/>
 <path d="M722,428.2H729Q732,428.5 732,430 Q730,432 734,434 Q738,437 734,440 Q730,443 734,446 Q738,449 734,452 Q730,455 734,458 Q736,461 734.5,463.5 Q734,465 730,465H719"/>
 <path d="M735,440 Q739,436 742,440 Q745,444 748,442 Q751,438 754,441 Q756,444 755.5,440V428"/>
 <path d="M735,440 Q739,445 742,441 Q745,437 748,441 Q751,445 754,444 Q761,445 760.5,440V428"/>
 <path d="M731,436L743,448M739,434l4,-2M741,448l3,2"/>
</g>
<circle cx="735" cy="440" r="1.1" fill="#111"/>
<rect x="722.8" y="432.4" width="2.4" height="24.2" rx="1" fill="#e8222c"/><rect x="725.2" y="432.4" width="2.4" height="24.2" rx="1" fill="#1e9a4a"/>
<g font-size="4.8" fill="#222"><text x="748.8" y="451.3">CAN</text><text x="748.8" y="456.8">BUS</text></g>
<!-- DME -->
<rect x="669" y="448" width="48" height="55.5" rx="2" fill="#c6c6c6" stroke="#8a8a8a" stroke-width=".8"/>
<rect x="671.6" y="451" width="33.5" height="49.5" fill="#e9e9e9" stroke="#9a9a9a" stroke-width=".6"/>
<rect x="705.1" y="451" width="4" height="49.5" fill="#b4b4b4"/>
<g fill="#444"><circle cx="671" cy="450" r=".8"/><circle cx="714.5" cy="450" r=".8"/><circle cx="671" cy="501.5" r=".8"/><circle cx="714.5" cy="501.5" r=".8"/></g>
<text x="687.3" y="480.1" font-size="9.6" fill="#1a1a1a">DME</text>
<g fill="#1e1e1e"><rect x="709.4" y="455.2" width="8.6" height="6.2"/><rect x="709.4" y="462.4" width="8.6" height="8"/><rect x="709.4" y="471.8" width="8.6" height="11.8"/><rect x="709.4" y="484.4" width="8.6" height="5.4"/><rect x="709.4" y="490.8" width="8.6" height="5.4"/></g>
<g font-size="4.4" fill="#fff" transform="rotate(90 713.7 475)"><text x="697" y="476.6">5</text><text x="705" y="476.6">4</text><text x="716.4" y="476.6">3</text><text x="725.6" y="476.6">2</text><text x="732" y="476.6">1</text></g>
<g stroke="#222" stroke-width="1" fill="none"><path d="M718,460.7h4M718,465h4M718,470.4h4M718,474.9h4M718,491h4M718,494.5h4"/></g>
<!-- DME->AGS CAN -->
<g stroke="#222" stroke-width=".8" fill="none">
 <path d="M722,491H729Q733.5,491 733.5,494 Q736.5,497 733,500 Q729.5,503 733,506 Q736.5,509 733,512 Q731,516.2 727,516.2H719"/>
 <path d="M722,494.5H728Q731,495 731,496.5 Q729.5,497.5 733,500 Q736.5,503 733,506 Q729.5,509 733,512 Q736,516 732,519 Q731,520 727,520H719"/>
</g>
<rect x="736.4" y="492.4" width="2.4" height="24.2" rx="1" fill="#e8222c"/><rect x="738.8" y="492.4" width="2.4" height="24.2" rx="1" fill="#1e9a4a"/>
<g font-size="4.8" fill="#222"><text x="723" y="505">CAN</text><text x="723" y="510.3">BUS</text></g>
<!-- AGS -->
<rect x="668.3" y="508.4" width="48" height="55.7" rx="2" fill="#c6c6c6" stroke="#8a8a8a" stroke-width=".8"/>
<rect x="671" y="511.5" width="31" height="49.5" fill="#e9e9e9" stroke="#9a9a9a" stroke-width=".6"/>
<rect x="702" y="511.5" width="4" height="49.5" fill="#b4b4b4"/>
<g fill="#444"><circle cx="670.5" cy="510.5" r=".8"/><circle cx="714" cy="510.5" r=".8"/><circle cx="670.5" cy="562" r=".8"/><circle cx="714" cy="562" r=".8"/></g>
<rect x="708.5" y="515.7" width="8.8" height="41.1" rx=".8" fill="#3f5f9f" stroke="#2c4680" stroke-width=".6"/>
<text x="686.9" y="540.5" font-size="10.6" fill="#3a5a9c">AGS</text>
<g stroke="#222" stroke-width="1" fill="none"><path d="M717.3,516.2h5M717.3,520h5M717.3,525h5M717.3,528.7h5M717.3,532.5h5M717.3,536h5M717.3,540h5M717.3,544.6h5M717.3,551.2h5M717.3,555h5"/></g>
<!-- orange K line -->
<path d="M722,544.6H740Q745.4,544.6 745.4,550V576Q745.4,581.7 740,581.7H681Q675.5,581.7 675.5,587V602" stroke="#f58220" stroke-width="1.4" fill="none"/>
<circle cx="745.4" cy="564" r="1.7" fill="#f58220"/><path d="M745.4,564h7" stroke="#f58220" stroke-width="1.4"/><path d="M751.5,561.6L758.8,564L751.5,566.4z" fill="#f58220"/>
<!-- battery + wire -->
<path d="M722,551.2H728.5Q732,551.2 732,554.5V566.3Q732,569.6 728.5,569.6H663" stroke="#e8222c" stroke-width="1.3" fill="none"/>
<rect x="681.8" y="566.6" width="15.2" height="6.2" fill="#e4e4e4" stroke="#222" stroke-width=".8"/><path d="M683,571.5Q686.5,571.5 689.4,569.6T695.8,567.8" stroke="#222" stroke-width=".8" fill="none"/>
<circle cx="680.6" cy="569.6" r=".9" fill="#222"/><circle cx="698.2" cy="569.6" r=".9" fill="#222"/>
<path d="M722,555h4.3v3.2M723.3,558.4h6M724.4,560h3.8M725.4,561.6h1.8" stroke="#222" stroke-width=".8" fill="none"/>
<circle cx="726.3" cy="556.5" r=".9" fill="#222"/>
<rect x="621" y="567" width="9.5" height="3.4" fill="#ddd" stroke="#222" stroke-width=".8"/><rect x="652.5" y="567" width="9.5" height="3.4" fill="#ddd" stroke="#222" stroke-width=".8"/>
<rect x="617.6" y="570" width="46.2" height="3.6" fill="#cfcfcf" stroke="#222" stroke-width=".8"/>
<rect x="619.5" y="573.6" width="43.5" height="23.2" fill="#e2e2e2" stroke="#222" stroke-width="1"/>
<rect x="620" y="576.5" width="42.5" height="6.8" fill="#2a2a2a"/>
<g fill="#fff"><circle cx="625.2" cy="579.9" r="2.1"/><circle cx="631.8" cy="579.9" r="2.1"/><circle cx="638.4" cy="579.9" r="2.1"/><circle cx="645" cy="579.9" r="2.1"/><circle cx="651.6" cy="579.9" r="2.1"/><circle cx="658.2" cy="579.9" r="2.1"/></g>
<path d="M621,569H616V597.6M612.6,597.8h6.6M613.8,599.4h4.2M614.8,601h2.2" stroke="#222" stroke-width=".8" fill="none"/>
<!-- diag connector & cable -->
<rect x="670.4" y="601.6" width="9.6" height="6.4" fill="#e8e8e8" stroke="#222" stroke-width=".9"/>
<rect x="671.6" y="608" width="7.2" height="5.6" fill="#ccc" stroke="#222" stroke-width=".8"/>
<rect x="671" y="613.6" width="8.4" height="8.6" fill="#e4e4e4" stroke="#222" stroke-width=".9"/><path d="M673.8,614v8M676.6,614v8" stroke="#666" stroke-width=".6"/>
<path d="M675.5,622V686.5Q675.5,691.5 671,691.5Q666.6,691.5 666.6,686.5V676Q666.5,672 665,668" stroke="#1a1a1a" stroke-width="2.7" fill="none"/>
<g font-size="4.8" fill="#222"><text x="642.6" y="624.2">DIAGNOSIS</text><text x="642.6" y="629.6">AND</text><text x="642.6" y="635">PROGRAMMING</text></g>
<!-- diag machine -->
<g stroke="#1c1c1c" stroke-width=".7" stroke-linejoin="round">
 <path d="M647,640.5l2,-1.5h7.5l.8,1.5v21.5h-10.3z" fill="#b4b4b4"/>
 <path d="M648,648l8,1.5v16l-8,-1.5z" fill="#8c8c8c"/>
 <path d="M643,639.5h6M644.5,639.5v6" fill="none" stroke-width=".6"/>
 <path d="M627.5,646q0,-1.2 1.3,-1.2l16.7,1.4v15.3l-16.8,1.4q-1.2,0 -1.2,-1.2z" fill="#3c3c3c"/>
 <path d="M631.4,649l13,.8v9l-13,.8z" fill="#dcdcdc" stroke-width=".5"/>
 <path d="M633.5,652.5h8v4h-8z" fill="#666" stroke="none"/>
 <path d="M629,663.5l15,-1l4,3.5h-21z" fill="#555"/>
 <path d="M619.4,666l8,-1.5h34l1,1.5l-1,2.6h-42z" fill="#2c2c2c"/>
 <path d="M626,669.5h14.5v33l-12.5,-4z" fill="#ababab"/>
 <path d="M640.5,669.5h21.8v22.5l-21.8,8z" fill="#c2c2c2"/>
 <path d="M641.5,684.5l20.8,-3v11l-20.8,7z" fill="#1c1c1c"/>
 <path d="M641.5,700.5l20.8,-7.5v5.5l-16,7z" fill="#9a9a9a"/>
 <path d="M621.5,669v31M624.3,669.5v31" fill="none" stroke-width="1"/>
 <path d="M627,673.5h12M627,676h12" fill="none" stroke-width=".5"/>
</g>
<g fill="#c8c8c8"><path d="M645.4,685.4l2,-.3v10.5l-2,.7zM649.6,684.8l2,-.3v10.3l-2,.7zM653.8,684.2l2,-.3v10.1l-2,.7zM658,683.6l2,-.3v9.9l-2,.7z"/></g>
<g fill="#e8e8e8" stroke="#1c1c1c" stroke-width="1.1"><circle cx="622.7" cy="701.2" r="2.8"/><circle cx="641.7" cy="707.7" r="3.2"/><circle cx="660.2" cy="699.6" r="2.4"/></g>
<path d="M657.5,640q4,8 5.5,18t2.5,17M660,639.5q5,10 6,22M663,640q3,8 2.5,17M655.5,641q3,6 4,14" stroke="#8a8a8a" stroke-width=".7" fill="none"/>
<path d="M660.5,638.5l2,-1l1.6,3.6l-2,1z" fill="#333"/>
<!-- ===== middle column ===== -->
<!-- cluster -->
<path d="M746.6,425Q745.5,401 769,391.5Q792,383.5 815,391.5Q838,401 837,425L835.5,428.4H748z" fill="#4c4c4c" stroke="#222" stroke-width=".8"/>
<path d="M750.5,421.5Q751.5,404 772,396.5Q792,391 812,396.5Q832.5,404 833.5,421.5z" fill="#9c9c9c" stroke="#222" stroke-width=".9"/>
<path d="M752,398Q770,386.5 792,386.5Q814,386.5 832,398" fill="none" stroke="#888" stroke-width="1.6"/>
<rect x="749.5" y="421.6" width="85" height="6" fill="#3a3a3a"/>
<g stroke="#151515" stroke-width="1.4">
 <circle cx="757.2" cy="414.4" r="5.8" fill="#8c8c8c"/><circle cx="824" cy="415" r="5.8" fill="#8c8c8c"/>
 <circle cx="777" cy="409.3" r="11" fill="#868686"/><circle cx="804.5" cy="409.3" r="11.6" fill="#868686"/>
</g>
<path d="M768.4,414.5A10,10 0 0 0 785.6,414.5z" fill="#5a5a5a"/><path d="M795.6,415A10.4,10.4 0 0 0 813.4,415z" fill="#606060"/>
<g fill="none" stroke="#f0f0f0" stroke-width="1.9" stroke-dasharray=".8 1.2"><path d="M769.6,414.6A8.6,8.6 0 1 1 784.4,414.6"/><path d="M796.6,414.8A9.2,9.2 0 1 1 812.4,414.8"/></g>
<g fill="none" stroke="#e8e8e8" stroke-width="1.5" stroke-dasharray=".7 1.3"><path d="M753.6,416.2A3.9,3.9 0 1 1 760.8,416.2"/><path d="M820.4,416.8A3.9,3.9 0 1 1 827.6,416.8"/></g>
<g stroke="#111" stroke-linecap="round"><path d="M777,409.6L771.6,417" stroke-width="2.2"/><path d="M804.5,410.5L796.5,413.6" stroke-width="1.2"/><path d="M804.5,409.3L810.5,404.6" stroke-width=".8"/><path d="M757.2,414.4l2.6,-3.4M824,415l-3,-3" stroke-width=".9"/></g>
<circle cx="777" cy="409.3" r="2.1" fill="#111"/><circle cx="804.5" cy="413.6" r="1.6" fill="#eee" stroke="#111" stroke-width=".6"/><circle cx="790.5" cy="399.6" r="1.2" fill="#eee"/><circle cx="790.5" cy="419.6" r="1.3" fill="#eee"/>
<g fill="#f2f2f2"><rect x="751" y="422.4" width="3.6" height="4.6"/><rect x="757" y="422.4" width="5.4" height="4.6"/><rect x="766.4" y="423" width="7.6" height="4"/><rect x="819" y="422.4" width="12" height="4.6"/></g>
<g fill="#f58220"><rect x="776.5" y="424" width="14.5" height="2.6"/><rect x="794" y="424" width="11" height="2.6"/><rect x="808.6" y="422.6" width="8.4" height="4.2"/></g>
<path d="M755.5,428.5v13.5M760.5,428.5v11" stroke="#222" stroke-width=".8" fill="none"/><path d="M754.2,431.8l1.3,-2.8l1.3,2.8zM759.2,431.8l1.3,-2.8l1.3,2.8z" fill="#222"/>
<path d="M775,427.6L766,434.7M817,427L856.6,434.9M828,416.5L838.4,415" stroke="#222" stroke-width=".8" fill="none"/>
<rect x="838.4" y="413" width="22.8" height="11.5" rx="1.6" fill="#5a5a5a" stroke="#333" stroke-width=".8"/>
<g font-size="5" fill="#f58220"><text x="850.2" y="418.8" textLength="20.6" lengthAdjust="spacingAndGlyphs">PRND432</text><text x="845.6" y="423.6">R</text></g>
<rect x="765.7" y="434.7" width="91.1" height="7.2" rx="1" fill="#5a5a5a" stroke="#444" stroke-width=".5"/>
<text x="811.4" y="441" font-size="7" fill="#f58220" textLength="85.5" lengthAdjust="spacingAndGlyphs" font-family="Liberation Mono, monospace" style="white-space:pre">EMERGENCY TRANSMI</text>
<g font-size="4.85" fill="#222"><text x="834.6" y="448.9">RANGE, PROGRAM</text><text x="834.6" y="454.2">&amp; FAULT DISPLAY</text></g>
<!-- relay -->
<rect x="766.4" y="449.7" width="27.6" height="13.8" rx="1.2" fill="#efefef" stroke="#222" stroke-width=".8"/>
<rect x="769.6" y="452" width="3.6" height="9.4" fill="#ccc" stroke="#222" stroke-width=".5"/><rect x="773.2" y="452" width="2.8" height="9.4" fill="#222"/>
<path d="M776,456.5h9.5M772.4,446v6M772.4,461.4v4.6M787.5,446v4.5l2.2,9.5M785.5,461v5" stroke="#222" stroke-width=".8" fill="none" stroke-dasharray="none"/>
<circle cx="772.4" cy="445.2" r=".8" fill="#222"/><circle cx="787.5" cy="445.2" r=".8" fill="#222"/><circle cx="789.8" cy="460.6" r=".8" fill="#222"/>
<g font-size="4.4" fill="#222" text-anchor="start"><text x="796.9" y="453.8">CCM</text><text x="796.9" y="458.6">MAIN</text><text x="796.9" y="463.5">RELAY</text></g>
<!-- red wires -->
<g stroke="#e8222c" stroke-width="1.3" fill="none">
 <path d="M772.4,465V467.6Q772.4,470.4 769.5,470.4H722"/>
 <path d="M785.5,465V521Q785.5,525 781.5,525H722"/>
 <path d="M785.5,476.7h5"/>
</g>
<path d="M789,474L795.8,476.7L789,479.4z" fill="#e8222c"/>
<rect x="782.5" y="498" width="6" height="14.5" fill="#eee" stroke="#222" stroke-width=".8"/><path d="M783.5,499Q783.5,503 785.5,505.2T787.5,511.5" stroke="#222" stroke-width=".8" fill="none"/>
<circle cx="785.5" cy="497" r=".8" fill="#222"/><circle cx="785.5" cy="513.5" r=".8" fill="#222"/>
<!-- red/black dashed wires -->
<g fill="none">
 <path id="d1" d="M722,474.9H768.5Q772.7,474.9 772.7,479V581Q772.7,586.4 767.5,586.4H704Q695.6,586.4 695.6,595V612Q695.6,619 702,620L707,620.7"/>
 <path id="d2" d="M833.5,505V524Q833.5,528.7 829,528.7H722"/>
</g>
<use href="#d1" stroke="#e8222c" stroke-width="1.5" fill="none"/><use href="#d1" stroke="#222" stroke-width="1.5" stroke-dasharray=".9 1.5" fill="none" opacity=".42"/>
<use href="#d2" stroke="#e8222c" stroke-width="1.4" fill="none"/><use href="#d2" stroke="#222" stroke-width="1.4" stroke-dasharray="1 1.2" fill="none" opacity=".4"/>
<!-- GR II -->
<rect x="818.3" y="479.5" width="33.2" height="20" rx="1.5" fill="#8c8c8c" stroke="#222" stroke-width="1"/>
<rect x="823" y="499.5" width="23" height="4.6" fill="#777" stroke="#222" stroke-width=".7"/><path d="M827,499.5v4.6M831,499.5v4.6M835,499.5v4.6M839,499.5v4.6M843,499.5v4.6" stroke="#444" stroke-width=".5"/>
<text x="835.2" y="493.8" font-size="9" fill="#151515">GR II</text>
<path d="M832.2,506.4l1.3,-2.4l1.3,2.4z" fill="#222"/>
<!-- harness -->
<g stroke-width="1" fill="none"><path d="M722,532.5L728.5,532" stroke="#f58220"/><path d="M722,536L728.5,534.5" stroke="#8a4a9c"/><path d="M722,536L728.5,537" stroke="#999"/><path d="M722,540L728.5,539.5" stroke="#1e9a4a" stroke-width="1.4"/><path d="M722,532.5L728.5,536" stroke="#c8a"/></g>
<rect x="728.5" y="530.9" width="136.5" height="6.6" fill="#141414"/><rect x="728.5" y="538.8" width="136.5" height="2.8" fill="#141414"/>
<rect x="771.2" y="530" width="3.4" height="12.4" fill="#fff"/>
<path d="M772.7,529V543" stroke="#e8222c" stroke-width="1.5"/><path d="M772.7,529V543" stroke="#222" stroke-width="1.5" stroke-dasharray=".9 1.5" opacity=".42"/>
<path d="M864,533.6H904" stroke="#141414" stroke-width="4.6" fill="none"/><path d="M864,533.8H904" stroke="#ddd" stroke-width=".9" fill="none"/>
<path d="M864,539.2H875Q886.5,539.2 886.5,551V619.6" stroke="#141414" stroke-width="6.4" fill="none"/>
<path d="M866,537.6H876Q888.2,537.8 888.2,551V619" stroke="#c8c8c8" stroke-width=".9" fill="none"/>
<path d="M888.6,566Q889,580 901,585Q916.6,590.5 916.6,601V618.6" stroke="#141414" stroke-width="3.4" fill="none"/>
<path d="M888.8,568Q889.4,580 901,584.6Q916.6,590.5 916.6,601V618.6" stroke="#bbb" stroke-width="1.4" fill="none"/>
<rect x="903" y="528.3" width="8.8" height="10.2" fill="#ddd" stroke="#222" stroke-width=".9"/><path d="M905.4,528.5v10M909.4,528.5v10" stroke="#888" stroke-width=".7"/>
<path d="M911.8,533.2H930.5" stroke="#141414" stroke-width="5.2" fill="none"/>
<g font-size="6.1" fill="#1a1a1a" text-anchor="start"><text x="779.6" y="550.2" textLength="94.3" lengthAdjust="spacingAndGlyphs">* COMPONENT LOCATIONS</text><text x="785.4" y="557.9" textLength="70.6" lengthAdjust="spacingAndGlyphs">&amp; UTILIZATION VARY</text></g>
<!-- shift cable (gray) -->
<path d="M812,641Q789,634 796.5,626Q815,615 905,599.5Q930,595.5 936.5,601Q940,605 940,616" stroke="#707070" stroke-width="2.4" fill="none"/>
<!-- shifter base lines -->
<g stroke="#999" stroke-width=".5" fill="none"><path d="M796,646L838,628L866,641L824,662zM806,650l36,-16M812,654l38,-17M822,630l26,14M806,636l28,16M838,606l4,22M842,628l24,30M780,632l20,14"/></g>
<!-- green shift arrow -->
<path d="M803,581.5Q825,580 835,598" stroke="#0f3f22" stroke-width="6.6" fill="none"/>
<path d="M795,580.3L804.5,573L804.5,589.4zM833.8,607.8L826.4,597.4L841.4,594.6z" fill="#1a9a4c" stroke="#0f3f22" stroke-width="1"/>
<path d="M803,581.5Q825,580 835,598" stroke="#1a9a4c" stroke-width="4.8" fill="none"/>
<path d="M801,582.8Q823,581.5 833,598" stroke="#5cc888" stroke-width="1" fill="none"/>
<!-- knob -->
<path d="M816.6,626L820.4,640" stroke="#222" stroke-width="3.2"/><path d="M816.6,626L820.4,640" stroke="#bbb" stroke-width="1.4"/>
<path d="M805.6,602Q802.6,595.6 811.5,595.4Q823,595.6 822.8,606Q822.4,616 819.6,626.4Q816.4,629.6 813.4,626.4Q811,614 805.6,602z" fill="#a6864a" stroke="#222" stroke-width="1"/>
<path d="M808,600Q812,598 816,601Q819,607 816,614" stroke="#8a6c34" stroke-width="3" fill="none" opacity=".6"/>
<!-- shifter parts -->
<path d="M819.5,637Q829,643 834.5,653.5" stroke="#c8203a" stroke-width="2.2" fill="none"/>
<path d="M824.5,638Q835,642 840,654L836,656.5Q831,646 822.5,641z" fill="#f5e61e" stroke="#8a7a10" stroke-width=".5"/>
<ellipse cx="816.8" cy="639.8" rx="2.6" ry="1.8" fill="#e8222c" transform="rotate(-25 816.8 639.8)"/>
<path d="M808,654l10,-4l2,2.6l-10,4.4z" fill="#e8d86a" stroke="#998" stroke-width=".4"/>
<!-- ignition switch -->
<path d="M711.5,600.5Q715,591.8 729,590.5Q745,590.5 752,597.6" stroke="#e8222c" stroke-width="1.2" fill="none"/>
<path d="M709,619.6Q707.4,613.4 711,611.8L716.5,609.8Q716,603.4 722,601.8L746,594.6Q751.5,594 752.6,598.6Q753,603.6 749,605.6L741,609Q741,613.4 736,615.2L716,621.6Q710.6,622.4 709,619.6z" fill="#f6f6f6" stroke="#555" stroke-width=".7"/><path d="M716.5,609.8Q717.5,615 716,621.6" stroke="#777" stroke-width=".6" fill="none"/>
<ellipse cx="724.6" cy="610.6" rx="4.6" ry="6.4" fill="#f58220" stroke="#a85a10" stroke-width=".6" transform="rotate(-20 724.6 610.6)"/>
<path d="M733,606l12,-5M734,609l12,-5" stroke="#777" stroke-width=".8"/>
<path d="M749.5,597.5Q750,594 753.5,593L764,590.6Q767.5,591.4 766.5,595L765,602Q763,605 759,604.6L753,606z" fill="#e4e4e4" stroke="#222" stroke-width="1"/>
<path d="M757.5,593.5l7,-1.6l-1,8l-6,1z" fill="#333"/><circle cx="754.6" cy="599.6" r="1" fill="#222"/>
<circle cx="707.4" cy="620.6" r="1.2" fill="#222"/><path d="M707.4,620.6l6,1.4M707.4,618.8l5,-.6" stroke="#c8203a" stroke-width=".8"/>
<path d="M763,603Q790,618 801,632Q808,640.5 815.5,640" stroke="#e8222c" stroke-width="1.1" fill="none"/>
<g font-size="4.8" fill="#222"><text x="757.4" y="614.3">IGNITION</text><text x="757.4" y="619.6">SWITCH</text><text x="757.4" y="624.8">INTERLOCK</text></g>
<!-- brake module + pedal -->
<path d="M688,636.5l2,-1.6l20.6,7.6v9l-1.6,1.4h-21z" fill="#c4c4c4" stroke="#222" stroke-width=".8"/>
<path d="M690,634.8l20.6,7.6" stroke="#111" stroke-width="2.2"/>
<path d="M691.7,650v-2.4M700.4,652v-2.4" stroke="#222" stroke-width="1"/>
<path d="M711,647.5l8,3" stroke="#222" stroke-width=".8" stroke-dasharray="2 1.2"/>
<path d="M716,638l5,14M719,638l4,13M721.5,638.5l3,12" stroke="#444" stroke-width=".7" fill="none"/>
<path d="M718.5,657Q717.5,654.5 720,653.5L729,650.6Q732,650 733,652.4L735,658Q735.6,660.4 733,661.6L724.6,665Q722,665.6 721,663z" fill="#3a3a3a" stroke="#151515" stroke-width=".8"/>
<path d="M721,656l10,-3.6M722,659l10,-3.6M723,662l10,-3.6" stroke="#888" stroke-width=".6"/>
<g font-size="4.8" fill="#222"><text x="720" y="671.2">BRAKE</text><text x="720" y="676.8">SIGNAL(S)</text></g>
<!-- kickdown -->
<path d="M750.6,640Q750.4,637.8 753,637.6L757.4,637.4L765.4,668.5L756,674.5Q753.6,673.6 754,671.4L756.4,668z" fill="#d8d8d8" stroke="#222" stroke-width="1"/>
<path d="M753,638.5L760.6,669.5L756.4,672.6" stroke="#555" stroke-width="1.6" fill="none"/>
<circle cx="742" cy="641" r="1.5" fill="#222"/><circle cx="742" cy="651" r="1.5" fill="#222"/><path d="M742,641l4.6,7.6M742,652.6v2.6M740,655.4h4" stroke="#222" stroke-width=".9" fill="none"/><path d="M745.2,645.6l2.4,4.6l-3.6,-1.6z" fill="#222"/>
<path d="M746.6,648.4l4,-2" stroke="#222" stroke-width=".6" stroke-dasharray="1 1"/>
<g font-size="4.8" fill="#222"><text x="750.5" y="681.4">KICK</text><text x="750.5" y="686.6">DOWN</text><text x="750.5" y="691.9">SIGNAL</text></g>
<!-- program switch -->
<path d="M769.4,640Q768.6,638 771,637L777,635.2Q779,634.8 780.6,636L798.6,651Q800.4,652.6 798.4,654L793.6,657.6Q791.6,658.6 789.6,657.6L770.4,641.8z" fill="#fafafa" stroke="#151515" stroke-width="1.1"/>
<path d="M772.6,639.4l4,-1.6l21,15l-4.4,2.4z" fill="none" stroke="#333" stroke-width=".5"/>
<path d="M779.6,643.6l3.6,-1.8l8,6l-3.6,2z" fill="#222"/><ellipse cx="790.6" cy="651.2" rx="2.4" ry="1.1" fill="#222" transform="rotate(36 790.6 651.2)"/><circle cx="775.6" cy="640.4" r="1" fill="#333"/>
<path d="M779.6,652v17M786.5,654v15" stroke="#222" stroke-width=".8" stroke-dasharray="1 1" fill="none"/>
<circle cx="775" cy="669.6" r="1.2" fill="#222"/><circle cx="775" cy="678.6" r="1.2" fill="#222"/><path d="M775,669.6l3,6" stroke="#222" stroke-width="1.3"/><path d="M774,681.6h2.2" stroke="#222" stroke-width=".8"/>
<circle cx="792" cy="669.6" r="1.2" fill="#222"/><circle cx="791.4" cy="678.6" r="1.2" fill="#222"/><path d="M792,669.6l-3.4,6" stroke="#222" stroke-width="1.3"/><path d="M790.4,681.6h2.2" stroke="#222" stroke-width=".8"/>
<g font-size="4.8" fill="#222"><text x="783.7" y="686.5">PROGRAM</text><text x="783.7" y="691.8">SWITCH</text></g>
<g font-size="4.8" fill="#222" text-anchor="start"><text x="801.7" y="681.8">SHIFT</text><text x="801.7" y="687">LOCK</text></g>
<!-- EWS -->
<path d="M852.9,663.8L869.5,652L883.3,657V663.8L866.7,673.5L854.3,668z" fill="#1e1e1e" stroke="#111" stroke-width=".6"/>
<path d="M854.3,668l12.4,5.5l16.6,-9.7" stroke="#666" stroke-width=".5" fill="none"/><path d="M856,667l10,4.4" stroke="#aaa" stroke-width=".8"/>
<text x="867.8" y="662.2" font-size="6.8" fill="#fff" transform="rotate(-30 867.8 660)" font-style="italic" textLength="17" lengthAdjust="spacingAndGlyphs">EWS</text>
<g font-size="4.7" fill="#222"><text x="869.5" y="629.5">*RANGE</text><text x="869.5" y="634.7">SWITCH</text></g>
<!-- ===== right column ===== -->
<defs><filter id="bl" x="-5%" y="-5%" width="110%" height="110%"><feGaussianBlur stdDeviation=".45"/></filter>
<linearGradient id="fan" gradientUnits="userSpaceOnUse" x1="1020" y1="477" x2="1005" y2="566"><stop offset="0" stop-color="#5c6ec0"/><stop offset=".35" stop-color="#8490cc"/><stop offset=".75" stop-color="#aab0dc"/><stop offset="1" stop-color="#e4e6f4"/></linearGradient>
<linearGradient id="fanfade" gradientUnits="userSpaceOnUse" x1="1050" y1="520" x2="975" y2="562"><stop offset="0" stop-color="#fff" stop-opacity="0"/><stop offset="1" stop-color="#fff" stop-opacity=".5"/></linearGradient>
<pattern id="stip" width="2.2" height="2.2" patternUnits="userSpaceOnUse"><rect width="2.2" height="2.2" fill="#d9eef5"/><circle cx=".6" cy=".6" r=".45" fill="#a9d6e6"/><circle cx="1.7" cy="1.7" r=".4" fill="#bfe2ee"/></pattern><linearGradient id="sol" x1="0" x2="1" y1="0" y2="0"><stop offset="0" stop-color="#6a6a6a"/><stop offset=".3" stop-color="#e8e8e8"/><stop offset=".7" stop-color="#cfcfcf"/><stop offset="1" stop-color="#666"/></linearGradient>
<linearGradient id="soly" x1="0" x2="0" y1="0" y2="1"><stop offset="0" stop-color="#e8dc7a" stop-opacity=".8"/><stop offset=".5" stop-color="#e8dc7a" stop-opacity="0"/></linearGradient>
<g id="sv"><path d="M-3.9,-1.2v-2.2q0,-1.4 1.2,-1.4M2.3,-1.2v-2.2q0,-1.4 1.2,-1.4" stroke="#222" stroke-width="1.3" fill="none"/><circle cx="-2.6" cy="-4.6" r=".9" fill="#ddd" stroke="#222" stroke-width=".5"/><circle cx="3.6" cy="-4.6" r=".9" fill="#ddd" stroke="#222" stroke-width=".5"/>
<rect x="-5.2" y="-1.4" width="10.4" height="2.6" rx=".8" fill="#555" stroke="#222" stroke-width=".5"/><rect x="-5.9" y="1" width="11.8" height="13.2" rx=".8" fill="url(#sol)" stroke="#333" stroke-width=".6"/>
<rect x="-4.2" y="14.2" width="8.4" height="2.6" fill="#3a3a3a"/><rect x="-3.2" y="16.8" width="6.4" height="2.2" fill="#8a8a8a" stroke="#333" stroke-width=".4"/><rect x="-4" y="19" width="8" height="2.2" fill="#3a3a3a"/><rect x="-2.8" y="21.2" width="5.6" height="1.6" fill="#777"/></g>
</defs>
<path id="fanp" d="M1010.5,477.5C1013,500 1010,519 1001,532C992,544 982,553 972,561L1062,566L1062.5,557C1063,530 1058,506 1040,493C1030,485 1020,480 1016,477.5z" fill="url(#fan)"/>
<use href="#fanp" fill="url(#fanfade)"/>
<g filter="url(#bl)">
<path d="M865.5,386.8H873.5L877,392L907,398L911,403V468.5L907,473.5L877,478L873.5,482.2H865.5z" fill="#f4f5f6" stroke="#a0a4a8" stroke-width=".9"/>
<path d="M868.6,389v91M867,390.5l8,1.5v5l30,6M867,478.5l8,-1.5v-5l30,-5M871,400h6l4,3M871,470h6l4,-3" fill="none" stroke="#b0b4b8" stroke-width=".8"/>
<path d="M872,400q-2,36 0,70" fill="none" stroke="#c4c8cc" stroke-width="1.2"/>
<path d="M911,404H925V406.5L1041.7,411.6V458H1023V470.5H938V458H911z" fill="#e2e6e9" stroke="#9ca0a6" stroke-width=".9"/>
<path d="M925,405.5L1041.7,410.5V414.2L925,409.2z" fill="#bcc2c8"/>
<path d="M925,411h117v2H925z" fill="#d8dce0"/>
<rect x="911" y="399" width="6" height="7" fill="#d8ccb4"/><rect x="918" y="399.5" width="5" height="8" fill="#a8a8a8"/><rect x="911" y="406" width="5" height="22" fill="#e4dccc"/><rect x="916.5" y="408" width="3.5" height="22" fill="#b4b4b4"/>
<rect x="911" y="444" width="5" height="24" fill="#e4dccc"/><rect x="916.5" y="442" width="3.5" height="30" fill="#b4b4b4"/><rect x="912" y="468" width="8" height="6" fill="#c8c8c8"/><rect x="920" y="456" width="6" height="10" fill="#dcd0b8"/>
<rect x="905" y="417" width="5.5" height="13" fill="#808080"/><rect x="905" y="442" width="5.5" height="13" fill="#808080"/><rect x="906.5" y="426.5" width="3" height="3" fill="#e8222c"/><rect x="906.5" y="442.5" width="3" height="3" fill="#e8222c"/>
<rect x="912.5" y="441" width="3" height="14" fill="#f07040"/>
<path d="M892.5,403.6A9.4,10.8 0 0 0 892.5,425.2z" fill="#e8222c"/>
<path d="M892.5,403.6A10,10.8 0 0 1 892.5,425.2z" fill="#f58220"/>
<ellipse cx="892.6" cy="414.4" rx="10.4" ry="11.2" fill="none" stroke="#555" stroke-width=".7"/>
<path d="M889,408.4q3.6,-2 7.2,0v7.6h-7.2z" fill="#fff"/><rect x="889.4" y="416.0" width="6.6" height="11.4" fill="#a8522a"/>
<rect x="885" y="427.4" width="14" height="3.8" fill="#8ab0a0"/><rect x="890.5" y="428.0" width="3" height="2.4" fill="#2a8ad8"/>
<path d="M879.5,405.4q-4,9 0,18" stroke="#e8dc8a" stroke-width="2" fill="none"/>
<path d="M876,403.4q-3,11 0,22" stroke="#b8bcc0" stroke-width="1" fill="none"/>
<path d="M903.5,402.4q6,12 0,24" stroke="#8c9094" stroke-width="1.1" fill="none"/>
<path d="M892.5,448.2A9.4,10.8 0 0 0 892.5,469.8z" fill="#e8222c"/>
<path d="M892.5,448.2A10,10.8 0 0 1 892.5,469.8z" fill="#f58220"/>
<ellipse cx="892.6" cy="459" rx="10.4" ry="11.2" fill="none" stroke="#555" stroke-width=".7"/>
<path d="M889,465q3.6,2 7.2,0v-7.6h-7.2z" fill="#fff"/><rect x="889.4" y="446.0" width="6.6" height="11.4" fill="#a8522a"/>
<rect x="885" y="442.2" width="14" height="3.8" fill="#8ab0a0"/><rect x="890.5" y="442.8" width="3" height="2.4" fill="#2a8ad8"/>
<path d="M879.5,450q-4,9 0,18" stroke="#e8dc8a" stroke-width="2" fill="none"/>
<path d="M876,448q-3,11 0,22" stroke="#b8bcc0" stroke-width="1" fill="none"/>
<path d="M903.5,447q6,12 0,24" stroke="#8c9094" stroke-width="1.1" fill="none"/>
<rect x="867.5" y="433" width="140" height="6" fill="#a8acb0"/><rect x="867.5" y="435" width="140" height="1.8" fill="#e0e2e4"/><rect x="865.8" y="431" width="4" height="10" rx="1" fill="#a0a0a0"/>
<rect x="1003.5" y="430" width="37.5" height="9.6" fill="#ee8c6c"/><rect x="1003.5" y="433.6" width="37.5" height="2.4" fill="#f4b8a0"/><path d="M1004,432h37M1004,438h37" stroke="#d86848" stroke-width=".6" stroke-dasharray="1 1"/>
<path d="M1040,429.5h17v-9h3.2v30h-3.2v-9h-17z" fill="#f0d8a0" stroke="#c8a860" stroke-width=".5"/><rect x="1042" y="432" width="12" height="7" fill="#fff" stroke="#bbb" stroke-width=".4"/><rect x="1059.5" y="433.8" width="8" height="3.6" fill="#c8c8c8" stroke="#999" stroke-width=".4"/>
<rect x="920.5" y="412.5" width="121" height="20" fill="#c4ccd0"/><rect x="920.5" y="439.5" width="121" height="19" fill="#c4ccd0"/>
<rect x="920.5" y="412.5" width="12.5" height="20" fill="#6a9078"/>
<rect x="920.5" y="438.7" width="12.5" height="20" fill="#6a9078"/>
<rect x="921" y="413" width="11.5" height="2" fill="#2a4aa0"/>
<rect x="921" y="456.2" width="11.5" height="2" fill="#2a4aa0"/>
<rect x="921" y="413" width="2" height="19" fill="#2a4aa0"/>
<rect x="921" y="439.2" width="2" height="19" fill="#2a4aa0"/>
<rect x="923.5" y="423" width="4.5" height="6" fill="#2038b0"/>
<rect x="923.5" y="442.2" width="4.5" height="6" fill="#2038b0"/>
<rect x="928" y="420" width="4.5" height="5" fill="#f4f4f4"/>
<rect x="928" y="446.2" width="4.5" height="5" fill="#f4f4f4"/>
<rect x="924" y="415.5" width="6" height="4" fill="#98b8a0"/>
<rect x="924" y="451.7" width="6" height="4" fill="#98b8a0"/>
<rect x="933.5" y="412.5" width="11" height="6.5" fill="#a04c26"/>
<rect x="933.5" y="452.2" width="11" height="6.5" fill="#a04c26"/>
<rect x="933.5" y="419" width="11" height="5" fill="#8ab0a0"/>
<rect x="933.5" y="447.2" width="11" height="5" fill="#8ab0a0"/>
<rect x="934.5" y="424" width="4.5" height="7" fill="#f4f4f4"/>
<rect x="934.5" y="440.2" width="4.5" height="7" fill="#f4f4f4"/>
<rect x="939.5" y="424" width="5" height="8.5" fill="#3a9ad8"/>
<rect x="939.5" y="438.7" width="5" height="8.5" fill="#3a9ad8"/>
<rect x="933.5" y="412.5" width="1.2" height="20" fill="#3a5ab0"/>
<rect x="933.5" y="438.7" width="1.2" height="20" fill="#3a5ab0"/>
<rect x="946" y="413" width="13.5" height="5.5" fill="#a04c26"/>
<rect x="946" y="452.7" width="13.5" height="5.5" fill="#a04c26"/>
<rect x="946" y="418.5" width="7.5" height="7" fill="#3a9ad8"/>
<rect x="946" y="445.7" width="7.5" height="7" fill="#3a9ad8"/>
<rect x="947.5" y="425.5" width="4.5" height="5" fill="#f4f4f4"/>
<rect x="947.5" y="440.7" width="4.5" height="5" fill="#f4f4f4"/>
<rect x="953.5" y="418.5" width="6" height="14" fill="#38a8d0"/>
<rect x="953.5" y="438.7" width="6" height="14" fill="#38a8d0"/>
<rect x="959.5" y="413" width="6" height="19.5" fill="#f09030"/>
<rect x="959.5" y="438.7" width="6" height="19.5" fill="#f09030"/>
<rect x="961" y="424" width="3" height="5.5" fill="#fff"/>
<rect x="961" y="441.7" width="3" height="5.5" fill="#fff"/>
<rect x="966" y="413" width="8.5" height="5.5" fill="#a04c26"/>
<rect x="966" y="452.7" width="8.5" height="5.5" fill="#a04c26"/>
<rect x="966" y="418.5" width="5" height="14" fill="#f4f4f4"/>
<rect x="966" y="438.7" width="5" height="14" fill="#f4f4f4"/>
<rect x="970" y="418.5" width="3.5" height="14" fill="#d8d8c8"/>
<rect x="970" y="438.7" width="3.5" height="14" fill="#d8d8c8"/>
<rect x="972.5" y="416" width="11" height="16.5" fill="#78aa8c"/>
<rect x="972.5" y="438.7" width="11" height="16.5" fill="#78aa8c"/>
<rect x="975" y="418.5" width="6.5" height="4" fill="#4a8ac8"/>
<rect x="975" y="448.7" width="6.5" height="4" fill="#4a8ac8"/>
<rect x="975" y="425" width="6.5" height="4" fill="#4a8ac8"/>
<rect x="975" y="442.2" width="6.5" height="4" fill="#4a8ac8"/>
<rect x="983.5" y="414.5" width="9" height="3.5" fill="#f5e61e"/>
<rect x="983.5" y="453.2" width="9" height="3.5" fill="#f5e61e"/>
<rect x="983.5" y="418" width="9" height="4.5" fill="#4a8ac8"/>
<rect x="983.5" y="448.7" width="9" height="4.5" fill="#4a8ac8"/>
<rect x="983.5" y="422.5" width="9" height="5.5" fill="#f5e61e"/>
<rect x="983.5" y="443.2" width="9" height="5.5" fill="#f5e61e"/>
<rect x="983.5" y="428" width="9" height="4.5" fill="#4a8ac8"/>
<rect x="983.5" y="438.7" width="9" height="4.5" fill="#4a8ac8"/>
<rect x="992.5" y="414.5" width="10.5" height="3.5" fill="#f5e61e"/>
<rect x="992.5" y="453.2" width="10.5" height="3.5" fill="#f5e61e"/>
<rect x="992.5" y="418" width="10.5" height="3.5" fill="#5a8ab8"/>
<rect x="992.5" y="449.7" width="10.5" height="3.5" fill="#5a8ab8"/>
<rect x="992.5" y="421.5" width="10.5" height="7" fill="#f05c3c"/>
<rect x="992.5" y="442.7" width="10.5" height="7" fill="#f05c3c"/>
<rect x="992.5" y="428.5" width="10.5" height="4" fill="#4a8ac8"/>
<rect x="992.5" y="438.7" width="10.5" height="4" fill="#4a8ac8"/>
<rect x="1004" y="415" width="11" height="5.5" fill="#a04c26"/>
<rect x="1004" y="450.7" width="11" height="5.5" fill="#a04c26"/>
<rect x="1004" y="420.5" width="11" height="5" fill="#f5e61e"/>
<rect x="1004" y="445.7" width="11" height="5" fill="#f5e61e"/>
<rect x="1005.5" y="425.5" width="8" height="4.5" fill="#5aa07a"/>
<rect x="1005.5" y="441.2" width="8" height="4.5" fill="#5aa07a"/>
<rect x="1004" y="430" width="11" height="2.5" fill="#f5e61e"/>
<rect x="1004" y="438.7" width="11" height="2.5" fill="#f5e61e"/>
<rect x="1015.2" y="416.5" width="8.8" height="16" fill="#f08030"/>
<rect x="1015.2" y="438.7" width="8.8" height="16" fill="#f08030"/>
<rect x="1017" y="420.5" width="4.2" height="7" fill="#fff"/>
<rect x="1017" y="443.7" width="4.2" height="7" fill="#fff"/>
<rect x="1025.5" y="417" width="4.5" height="15" fill="#4a6ab8"/>
<rect x="1025.5" y="439.2" width="4.5" height="15" fill="#4a6ab8"/>
<rect x="1030" y="418" width="11.5" height="6" fill="#dcdcec"/>
<rect x="1030" y="447.2" width="11.5" height="6" fill="#dcdcec"/>
<rect x="1030" y="424.5" width="11.5" height="6.5" fill="#a0a8c4"/>
<rect x="1030" y="440.2" width="11.5" height="6.5" fill="#a0a8c4"/>
<rect x="938" y="458" width="85" height="7" fill="#f0f2f4" stroke="#a8acb0" stroke-width=".5"/>
<rect x="944" y="459" width="10" height="5" fill="#fff" stroke="#aaa" stroke-width=".4"/><rect x="959" y="459" width="8" height="5" fill="#fff" stroke="#aaa" stroke-width=".4"/><rect x="961.5" y="460.8" width="2.6" height="2.6" fill="#111"/><rect x="969" y="459" width="10" height="5" fill="#fff" stroke="#aaa" stroke-width=".4"/>
<rect x="981" y="459.4" width="21.5" height="6.2" fill="#48b0e0"/><path d="M983,460l3,5M987,460l3,5M991,460l3,5M995,460l3,5M999,460l3,5" stroke="#b8e0f0" stroke-width=".7"/>
<rect x="1004" y="459" width="14" height="5.6" fill="#fff" stroke="#aaa" stroke-width=".4"/>
<rect x="939" y="464.6" width="85" height="3.8" fill="#8cbcb8"/>
<rect x="939" y="468.2" width="67.5" height="10.4" fill="#34a4e0"/><path d="M941,470h64M941,473h64M941,476h64" stroke="#68c0ec" stroke-width=".7"/>
<path d="M933,458h5v12l2,12q1,4 6,4.4h58q6,-.4 7,-5l1,-4h-5.5v3.6h-67.5v-11z" fill="#f6f7f8" stroke="#a8acb0" stroke-width=".7"/>
<rect x="935.4" y="459" width="2.6" height="12" fill="#e8dc8a" stroke="#b8a860" stroke-width=".3"/>
<path d="M1023,458h18.7v10h-6v4h-12.7z" fill="#e8eaec" stroke="#9ca0a6" stroke-width=".7"/>
<path d="M1041.7,444.5l12,4v7.5h-12z" fill="#c0c4c8" stroke="#999" stroke-width=".4"/>
<rect x="1031" y="454.5" width="3" height="14" fill="#e8dc8a" stroke="#a89848" stroke-width=".4"/><rect x="1030.4" y="462" width="4.2" height="3" fill="#d0c470"/>
</g>
<text x="1047.6" y="456.3" font-size="2.6" fill="#222">E1000</text>
<rect x="959.6" y="472.5" width="27.6" height="9" rx=".8" fill="#f58220" stroke="#222" stroke-width=".8"/>
<path d="M962,477.4h4.5l1.4,-2.4l2,4.6l2,-4.8l2,4.8l2,-4.8l2,4.6l1.6,-3.2l1.4,1.2h3" stroke="#151515" stroke-width=".9" fill="none"/><path d="M964,479.4l18,-5" stroke="#151515" stroke-width=".5"/>
<rect x="1008" y="469" width="7.2" height="8.4" rx=".8" fill="#26306e" stroke="#151a40" stroke-width=".6"/><rect x="1009.4" y="471" width="4.4" height="4.6" fill="#a4b4ec"/><rect x="1009.4" y="472.6" width="4.4" height="1.2" fill="#e8ecff"/>
<g font-size="4.8" fill="#222"><text x="924.1" y="492.7">TURBINE</text><text x="924.1" y="498">SPEED</text><text x="974.2" y="492.7">OIL</text><text x="974.2" y="498">TEMP</text><text x="1047" y="479.8">OUTPUT</text><text x="1047" y="485.1">SPEED</text></g>
<g fill="none" stroke-width="1.2">
<path d="M1032,471V500C1032,515 1015,523 999,526C975,530.5 950,531.5 931,533" stroke="#5c7c4c"/>
<path d="M986.5,477C998,476.6 1003.5,480 1001.6,487C999,497 975,512 962,520C952,526 940,531 931,533" stroke="#f2b4bc"/>
<path d="M936.6,478C937,500 945,511 956,517.5C966,523 962,530 950,531.5L931,533.6" stroke="#5a2a0a"/>
<path id="yb1" d="M960,477C953,477.6 951.6,484 953.4,490C957,505 959.4,512 957,518C955,524 945,529.5 931,533.2"/>
</g>
<use href="#yb1" stroke="#f5e61e" stroke-width="1.35" fill="none"/><use href="#yb1" stroke="#222" stroke-width="1.35" stroke-dasharray="1.2 1.4" fill="none"/>
<g fill="none" stroke-width="1.1">
<path d="M931,534.4C944,538 951.0,548 951.5,559" stroke="#1e9a4a" stroke-width="1.3"/>
<path d="M932,533.8C950,536 957.1999999999999,546 957.6999999999999,559" stroke="#e8222c" stroke-width="1.3"/>
<path d="M934,534.4C955,538 964.23,548 965.23,559" stroke="#808080"/>
<path d="M938,533.8C966,537 976.96,546 978.96,559" stroke="#b4682a"/>
<path d="M942,535C972,539 991.6899999999999,546 992.6899999999999,559" stroke="#9aa" stroke-dasharray=".9 1"/>
<path d="M945,534C985,535 1006.42,540 1006.42,559" stroke="#151515" stroke-width="1.3"/>
<path d="M950,533C1000,532 1031.8799999999999,538 1033.8799999999999,559" stroke="#7c9460"/>
</g>
<path id="yb2" d="M945,533.4C992,533 1018.1,540 1020.1,559" fill="none"/><use href="#yb2" stroke="#f5e61e" stroke-width="1.35" fill="none"/><use href="#yb2" stroke="#222" stroke-width="1.35" stroke-dasharray="1.2 1.4" fill="none"/>
<path id="yb3" d="M950,532.4C1010,529 1045.6,536 1047.6,559" fill="none"/><use href="#yb3" stroke="#f5e61e" stroke-width="1.35" fill="none"/><use href="#yb3" stroke="#222" stroke-width="1.35" stroke-dasharray="1.2 1.4" fill="none"/>
<path d="M957.7,559C957.7,543 971.4,543 971.4,559M971.4,559C971.4,543 985.2,543 985.2,559M985.2,559C985.2,543 998.9,543 998.9,559M998.9,559C998.9,543 1012.6,543 1012.6,559M1012.6,559C1012.6,543 1026.3,543 1026.3,559M1026.3,559C1026.3,543 1040.1,543 1040.1,559M1040.1,559C1040.1,543 1053.8,543 1053.8,559" stroke="#e8222c" stroke-width="1.4" fill="none"/>
<g fill="url(#stip)" stroke="#86c6dc" stroke-width="1.6" stroke-dasharray="1.1 1.1">
<path d="M956,580Q954,580 954,583V600Q956,604 954.6,608V624Q954.6,627.4 958,627.4H1058Q1062.5,627.4 1062.5,623V606Q1060.5,602 1062.5,598V583Q1062.5,580 1060,580z"/>
<path d="M958,629.4H1056Q1059.6,629.4 1059.6,633V660Q1057.6,664 1059.6,668V676Q1059.6,680 1056,680H1030Q1022,684.6 1008,684.6H990Q984,684.6 978,680H960Q954,680 950,676Q944.6,672 944.6,664V646Q944.6,636 950,634Q954,629.4 958,629.4z"/>
<path d="M960,688Q980,685.6 1000,688Q1030,686 1054,688Q1056.6,688.4 1056.6,692V716Q1056.6,719.6 1053,719.6H961Q957.4,719.6 957.4,716V692Q957.4,688.4 960,688z"/>
</g>
<g fill="#eef7fa"><circle cx="958" cy="590" r="1.2"/><circle cx="1058" cy="612" r="1.4"/><circle cx="958" cy="640" r="1.3"/><circle cx="950" cy="660" r="1.3"/><circle cx="1054" cy="672" r="1.2"/><circle cx="962" cy="700" r="1.2"/><circle cx="1052" cy="704" r="1.2"/><circle cx="1040" cy="584" r="1.2"/><circle cx="985" cy="676" r="1.3"/><circle cx="1020" cy="680" r="1.2"/><circle cx="974" cy="628" r="1"/><circle cx="1030" cy="628.4" r="1"/></g>
<use href="#sv" x="954.4" y="563.4"/>
<rect x="948.5" y="564.4" width="11.8" height="13.2" fill="url(#soly)"/>
<use href="#sv" x="968.1" y="563.4"/>
<rect x="962.2" y="564.4" width="11.8" height="13.2" fill="url(#soly)"/>
<use href="#sv" x="981.9" y="563.4"/>
<rect x="976.0" y="564.4" width="11.8" height="13.2" fill="url(#soly)"/>
<use href="#sv" x="995.6" y="563.4"/>
<rect x="989.7" y="564.4" width="11.8" height="13.2" fill="url(#soly)"/>
<use href="#sv" x="1009.3" y="563.4"/>
<rect x="1003.4" y="564.4" width="11.8" height="13.2" fill="url(#soly)"/>
<use href="#sv" x="1023.0" y="563.4"/>
<use href="#sv" x="1036.8" y="563.4"/>
<use href="#sv" x="1050.5" y="563.4"/>
<g font-size="3.1" fill="#e8222c"><text x="954.4" y="572.6">EDS 1</text><text x="968.1" y="572.6">EDS 4</text><text x="981.9" y="572.6">EDS 3</text><text x="995.6" y="572.6">EDS 2</text><text x="1009.3" y="572.6">EDS 5</text><text x="1023.0" y="572">MV 1</text><text x="1036.8" y="572">MV 2</text><text x="1050.5" y="572">MV 3</text></g>
<rect x="962.2" y="592.6" width="5.6" height="32" fill="#2c2c2c"/><rect x="962.2" y="606" width="8.3" height="18.6" fill="#2c2c2c"/><path d="M963,594v30M964.6,594v30M966.2,594v30M968,607v17M969.4,607v17" stroke="#666" stroke-width=".4"/>
<rect x="977.0" y="597.0" width="3.1" height="27.6" fill="#1c1c1c"/><rect x="976.0" y="597.5" width="5.2" height="3.0" fill="#f2f2f2" stroke="#222" stroke-width=".5"/><rect x="976.0" y="602.5" width="5.2" height="5.0" fill="#f2f2f2" stroke="#222" stroke-width=".5"/><rect x="976.0" y="610.0" width="5.2" height="4.0" fill="#f2f2f2" stroke="#222" stroke-width=".5"/>
<rect x="990.0" y="590.0" width="3.1" height="34.6" fill="#1c1c1c"/><rect x="989.0" y="591.0" width="5.2" height="3.4" fill="#f2f2f2" stroke="#222" stroke-width=".5"/><rect x="989.0" y="596.5" width="5.2" height="2.6" fill="#f2f2f2" stroke="#222" stroke-width=".5"/><rect x="989.0" y="603.0" width="5.2" height="5.0" fill="#f2f2f2" stroke="#222" stroke-width=".5"/><rect x="989.0" y="611.0" width="5.2" height="4.0" fill="#f2f2f2" stroke="#222" stroke-width=".5"/>
<rect x="1001.2" y="590.0" width="2.9" height="34.6" fill="#1c1c1c"/><rect x="1000.2" y="591.0" width="4.8" height="3.0" fill="#f2f2f2" stroke="#222" stroke-width=".5"/><rect x="1000.2" y="597.0" width="4.8" height="2.6" fill="#f2f2f2" stroke="#222" stroke-width=".5"/><rect x="1000.2" y="604.5" width="4.8" height="4.4" fill="#f2f2f2" stroke="#222" stroke-width=".5"/><rect x="1000.2" y="612.0" width="4.8" height="4.0" fill="#f2f2f2" stroke="#222" stroke-width=".5"/>
<rect x="1011.6" y="601.2" width="2.4" height="9" fill="#f2f2f2" stroke="#222" stroke-width=".5"/><rect x="1010.6" y="610" width="4.4" height="14.6" fill="#f2f2f2" stroke="#222" stroke-width=".5"/><rect x="1010.6" y="620" width="4.4" height="2" fill="#222"/>
<rect x="1022.4" y="591.7" width="3.6" height="16" fill="#1c1c1c"/><rect x="1022.2" y="607.0" width="3.6" height="17.6" fill="#1c1c1c"/><rect x="1021.0" y="603.0" width="6.0" height="4.0" fill="#f2f2f2" stroke="#222" stroke-width=".5"/><rect x="1021.0" y="609.0" width="6.0" height="4.0" fill="#f2f2f2" stroke="#222" stroke-width=".5"/><rect x="1021.0" y="615.0" width="6.0" height="9.6" fill="#f2f2f2" stroke="#222" stroke-width=".5"/>
<rect x="1033.4" y="594.3" width="3.6" height="30.3" fill="#1c1c1c"/><rect x="1032.2" y="594.6" width="6.0" height="4.0" fill="#f2f2f2" stroke="#222" stroke-width=".5"/><rect x="1032.2" y="601.0" width="6.0" height="5.6" fill="#f2f2f2" stroke="#222" stroke-width=".5"/><path d="M1034,608l2.4,16" stroke="#888" stroke-width=".6"/>
<rect x="1045.6" y="592.6" width="5.6" height="32" fill="#2c2c2c"/><rect x="1043.4" y="606" width="9.6" height="18.6" fill="#2c2c2c"/><path d="M1046.6,594v30M1048.2,594v30M1049.8,594v30M1044.6,607v17M1052,607v17" stroke="#666" stroke-width=".4"/>
<rect x="965.0" y="631.5" width="4.1" height="28.5" fill="#1c1c1c"/><rect x="963.6" y="632.0" width="6.9" height="5.6" fill="#f2f2f2" stroke="#222" stroke-width=".5"/><rect x="963.6" y="639.0" width="6.9" height="4.0" fill="#f2f2f2" stroke="#222" stroke-width=".5"/><rect x="963.6" y="645.0" width="6.9" height="4.0" fill="#f2f2f2" stroke="#222" stroke-width=".5"/>
<rect x="976.9" y="631.5" width="3.5" height="33.7" fill="#1c1c1c"/><rect x="975.7" y="644.0" width="5.9" height="4.0" fill="#f2f2f2" stroke="#222" stroke-width=".5"/><rect x="975.7" y="652.0" width="5.9" height="5.0" fill="#f2f2f2" stroke="#222" stroke-width=".5"/><rect x="975.7" y="659.6" width="5.9" height="5.4" fill="#f2f2f2" stroke="#222" stroke-width=".5"/>
<rect x="987.6" y="631.5" width="7" height="26" fill="#2c2c2c"/><path d="M988,633h6.4M988,634.8h6.4M988,636.6h6.4M988,638.4h6.4M988,640.2h6.4M988,642h6.4M988,643.8h6.4M988,645.6h6.4M988,647.4h6.4M988,649.2h6.4M988,651h6.4M988,652.8h6.4M988,654.6h6.4" stroke="#888" stroke-width=".45"/>
<rect x="987.2" y="657.4" width="7.8" height="6.4" fill="#f2f2f2" stroke="#222" stroke-width=".6"/><rect x="989" y="663.8" width="4.2" height="5" fill="#ddd" stroke="#222" stroke-width=".5"/><rect x="986.8" y="668.8" width="8.6" height="3.6" rx="1" fill="#f2f2f2" stroke="#222" stroke-width=".6"/><rect x="987.6" y="672.4" width="7" height="4" fill="#ccc" stroke="#222" stroke-width=".5"/><rect x="988.6" y="676.4" width="5" height="6.6" fill="#f2f2f2" stroke="#222" stroke-width=".5"/>
<rect x="999.6" y="629" width="6" height="7.6" fill="#fff"/>
<rect x="1000.5" y="639.3" width="3.4" height="31.1" fill="#1c1c1c"/><rect x="999.4" y="651.0" width="5.6" height="3.6" fill="#f2f2f2" stroke="#222" stroke-width=".5"/><rect x="999.4" y="657.0" width="5.6" height="5.0" fill="#f2f2f2" stroke="#222" stroke-width=".5"/><rect x="999.4" y="664.6" width="5.6" height="5.4" fill="#f2f2f2" stroke="#222" stroke-width=".5"/>
<rect x="1013.3" y="631.5" width="3.1" height="27.5" fill="#1c1c1c"/><rect x="1012.3" y="632.0" width="5.2" height="3.6" fill="#f2f2f2" stroke="#222" stroke-width=".5"/><rect x="1012.3" y="637.6" width="5.2" height="4.6" fill="#f2f2f2" stroke="#222" stroke-width=".5"/>
<rect x="1025.2" y="631.5" width="3.6" height="24.2" fill="#1c1c1c"/><rect x="1024.0" y="632.0" width="6.0" height="4.0" fill="#f2f2f2" stroke="#222" stroke-width=".5"/><rect x="1024.0" y="637.6" width="6.0" height="5.0" fill="#f2f2f2" stroke="#222" stroke-width=".5"/>
<rect x="1036" y="631.5" width="5.6" height="17.4" fill="#1c1c1c"/><path d="M1037,633l3.6,15" stroke="#777" stroke-width=".5"/>
<rect x="1047.2" y="631.5" width="3.6" height="24.2" fill="#1c1c1c"/><rect x="1046.0" y="632.0" width="6.0" height="3.6" fill="#f2f2f2" stroke="#222" stroke-width=".5"/><rect x="1046.0" y="637.0" width="6.0" height="4.6" fill="#f2f2f2" stroke="#222" stroke-width=".5"/><rect x="1046.0" y="643.0" width="6.0" height="3.6" fill="#f2f2f2" stroke="#222" stroke-width=".5"/>
<rect x="1031.4" y="660" width="5.2" height="16.4" fill="#1c1c1c"/><path d="M1032.8000000000002,661l2.4,15" stroke="#777" stroke-width=".5"/>
<rect x="1040" y="660" width="5.2" height="16.4" fill="#1c1c1c"/><path d="M1041.4,661l2.4,15" stroke="#777" stroke-width=".5"/>
<rect x="1048.3" y="660" width="5.2" height="16.4" fill="#1c1c1c"/><path d="M1049.7,661l2.4,15" stroke="#777" stroke-width=".5"/>
<path d="M1006,672.6Q1012,674 1017,671Q1021.6,667.6 1018,665Q1014,663.4 1011,666.4" stroke="#f4fafc" stroke-width="2.2" fill="none"/>
<rect x="964.8" y="692.8" width="3.4" height="23.6" fill="#1c1c1c"/><rect x="963.7" y="693.0" width="5.6" height="4.6" fill="#f2f2f2" stroke="#222" stroke-width=".5"/><rect x="963.7" y="703.0" width="5.6" height="3.6" fill="#f2f2f2" stroke="#222" stroke-width=".5"/><rect x="963.7" y="711.0" width="5.6" height="4.6" fill="#f2f2f2" stroke="#222" stroke-width=".5"/>
<rect x="977.5" y="690.2" width="3.4" height="26.2" fill="#1c1c1c"/><rect x="976.4" y="700.0" width="5.6" height="4.0" fill="#f2f2f2" stroke="#222" stroke-width=".5"/><rect x="976.4" y="708.0" width="5.6" height="3.0" fill="#f2f2f2" stroke="#222" stroke-width=".5"/><rect x="976.4" y="712.0" width="5.6" height="4.0" fill="#f2f2f2" stroke="#222" stroke-width=".5"/>
<rect x="989.0" y="693.6" width="3.4" height="22.8" fill="#1c1c1c"/><rect x="987.9" y="711.0" width="5.6" height="4.6" fill="#f2f2f2" stroke="#222" stroke-width=".5"/>
<rect x="1000.3" y="692.6" width="3.4" height="23.8" fill="#1c1c1c"/><rect x="999.2" y="693.6" width="5.6" height="4.6" fill="#f2f2f2" stroke="#222" stroke-width=".5"/><rect x="999.2" y="703.0" width="5.6" height="4.0" fill="#f2f2f2" stroke="#222" stroke-width=".5"/>
<rect x="1010.6" y="694.0" width="3.4" height="22.4" fill="#1c1c1c"/><rect x="1009.5" y="705.0" width="5.6" height="3.4" fill="#f2f2f2" stroke="#222" stroke-width=".5"/><rect x="1009.5" y="711.0" width="5.6" height="4.6" fill="#f2f2f2" stroke="#222" stroke-width=".5"/>
<rect x="1021.0" y="694.0" width="3.4" height="22.4" fill="#1c1c1c"/><rect x="1019.9" y="706.0" width="5.6" height="3.0" fill="#f2f2f2" stroke="#222" stroke-width=".5"/><rect x="1019.9" y="711.0" width="5.6" height="4.6" fill="#f2f2f2" stroke="#222" stroke-width=".5"/>
<rect x="1031.3" y="691.0" width="3.4" height="25.4" fill="#1c1c1c"/><rect x="1030.2" y="701.0" width="5.6" height="4.0" fill="#f2f2f2" stroke="#222" stroke-width=".5"/><rect x="1030.2" y="709.0" width="5.6" height="3.0" fill="#f2f2f2" stroke="#222" stroke-width=".5"/><rect x="1030.2" y="712.0" width="5.6" height="4.0" fill="#f2f2f2" stroke="#222" stroke-width=".5"/>
<rect x="1044.3" y="691.0" width="3.4" height="25.4" fill="#1c1c1c"/><rect x="1043.2" y="702.0" width="5.6" height="4.0" fill="#f2f2f2" stroke="#222" stroke-width=".5"/><rect x="1043.2" y="710.0" width="5.6" height="5.6" fill="#f2f2f2" stroke="#222" stroke-width=".5"/>
<path d="M937,613.4h7M940.4,613.4v6" stroke="#222" stroke-width=".8" fill="none"/>
<rect x="938.4" y="619.4" width="3.4" height="7.8" fill="#d4d4d4" stroke="#222" stroke-width=".7"/><path d="M941.8,623.4h7.6" stroke="#222" stroke-width=".8"/>
<rect x="949.4" y="620.2" width="7.6" height="5.4" fill="#999" stroke="#222" stroke-width=".8"/>
<rect x="952.6" y="625.6" width="3.6" height="47" fill="#f2f2f2" stroke="#222" stroke-width=".7"/><rect x="951.6" y="649" width="5.6" height="2.6" fill="#ccc" stroke="#222" stroke-width=".5"/><rect x="951.4" y="653.4" width="6" height="5" fill="#eee" stroke="#222" stroke-width=".5"/><rect x="951.6" y="671" width="5.6" height="2.4" fill="#333"/><rect x="951.6" y="674.4" width="5.6" height="2" fill="#333"/><rect x="952" y="677" width="4.8" height="2.2" fill="#888" stroke="#222" stroke-width=".4"/>
<path d="M939.3,628.6L944.4,635H941.6V644.4H944.4L939.3,650.8L934.2,644.4H937V635H934.2z" fill="#1a9a4c" stroke="#0f3f22" stroke-width=".8"/>
<g font-size="5.4" fill="#222"><text x="919.4" y="555.1">VALVE BODY</text><text x="919.4" y="561">ELECTRICAL</text><text x="919.4" y="567">&amp;</text><text x="919.4" y="573">MECHANICAL</text><text x="919.4" y="579">CONTROL</text></g>
<path d="M935.6,560.4L947.6,568.6M938,574.6L950.6,618.6" stroke="#222" stroke-width=".7" fill="none"/><path d="M948.4,569.2l-3,-.6l1.6,-2.2zM951,620l-2.4,-2.4l2.6,-.8z" fill="#222"/>
<g fill="none">
<path d="M916,619Q910.6,622 910.6,630V690Q910.6,700.9 900,700.9H745Q735,700.9 735,690C735,680 741.5,675 741.2,668C741,660 732,650 731.5,641C731,633 735,631 737.5,631.3C741,632 742,636 742,640" stroke="#7c5a48" stroke-width="1.2"/>
<path d="M916.5,619V697Q916.5,707 906.5,707H710Q700.4,707 700.4,697V652" stroke="#f07a20" stroke-width="1.3"/>
<path d="M918,620Q922.5,624 922.5,632V702Q922.5,711.6 913,711.6H701Q691.7,711.6 691.7,702V650" stroke="#8a8a8a" stroke-width="1.1" stroke-dasharray=".8 1"/>
<path d="M884,619.6V631Q884,638.3 877,638.3H838" stroke="#1e9a4a" stroke-width="1.2"/>
<path id="yb4" d="M885.4,619.6V634Q885.4,641.6 878,641.6H838"/>
<path d="M887,619.6V637Q887,644.6 880,644.6H840" stroke="#4a6ab0" stroke-width=".9"/>
<path d="M888,619.6V639Q888,646.6 881,646.6H842" stroke="#bbb" stroke-width=".8"/>
<path id="ob1" d="M889,619.6V641Q889,648.6 882,648.6H851.6"/>
<path d="M857,624V630Q857,634.6 852,634.6H838Q833,635 832,638.6" stroke="#e8222c" stroke-width="1.4"/>
<path id="lo1" d="M888.6,622V672Q888.6,677 883,677H818Q805,676 804.7,665Q805,660 810,659.6L814,657"/>
<path id="ob2" d="M890,621Q892,623 892,627V676Q892,681 886,681H818Q801.6,680 801.2,665Q801.4,657 808,656"/>
<path id="ye1" d="M887.5,621Q897.8,622 897.8,631V684.6Q897.8,690.6 891,690.6H802Q797.6,690.6 797.6,686V670.4Q797.6,666 794.2,666Q791.3,666.4 791.3,669.6"/>
<path d="M890.2,621.4Q902.7,621 902.7,629V691Q902.7,695.6 898,695.6H774.6Q769.6,695.6 769.6,690V668.6Q769.6,664.5 772.6,664.5Q775,665 775,668" stroke="#5a72b8" stroke-width="1" stroke-dasharray="1 .9"/>
<path id="ob3" d="M850,650.4C842,665 841,668 844.6,671.4Q848,673 852.6,668.4"/>
</g>
<use href="#yb4" stroke="#f5e61e" stroke-width="1.35" fill="none"/><use href="#yb4" stroke="#222" stroke-width="1.5" stroke-dasharray="1.2 1.6" fill="none" opacity=".7"/>
<use href="#ob1" stroke="#f07a20" stroke-width="1.4" fill="none"/><use href="#ob1" stroke="#4a5ab0" stroke-width="1.4" stroke-dasharray=".8 1.2" fill="none"/>
<use href="#ob2" stroke="#f07a20" stroke-width="1.4" fill="none"/><use href="#ob2" stroke="#4a5ab0" stroke-width="1.4" stroke-dasharray=".8 1.2" fill="none"/>
<use href="#ob3" stroke="#f07a20" stroke-width="1.4" fill="none"/><use href="#ob3" stroke="#4a5ab0" stroke-width="1.4" stroke-dasharray=".8 1.2" fill="none"/>
<use href="#lo1" stroke="#f4c8a0" stroke-width="1.3" fill="none"/><use href="#lo1" stroke="#c87a40" stroke-width="1.3" stroke-dasharray=".7 1.1" fill="none"/>
<use href="#ye1" stroke="#6a5c10" stroke-width="2" fill="none"/><use href="#ye1" stroke="#f0e020" stroke-width="1.1" fill="none"/>
<circle cx="850" cy="648.8" r="1.6" fill="#ccc" stroke="#555" stroke-width=".6"/>
<text x="857" y="624.4" font-size="5" fill="#222">*</text>


</g>
</svg>

<svg class="abs" style="left:0;top:0" width="1157" height="140" viewBox="0 0 1157 140">
<defs>
 <linearGradient id="pg" x1="0" y1="0" x2="0" y2="1"><stop offset="0" stop-color="#fff"/><stop offset="1" stop-color="#e6e6e6"/></linearGradient>
 <linearGradient id="yl" x1="0" y1="0" x2="0" y2="1"><stop offset="0" stop-color="#ffe680"/><stop offset="1" stop-color="#e8a818"/></linearGradient>
 <linearGradient id="prb" x1="0" y1="0" x2="0" y2="1"><stop offset="0" stop-color="#a8c0e0"/><stop offset="1" stop-color="#5c7cb0"/></linearGradient>
 <linearGradient id="gr" x1="0" y1="0" x2="0" y2="1"><stop offset="0" stop-color="#eee"/><stop offset="1" stop-color="#c4c4c4"/></linearGradient>
</defs>
<!-- 1 doc + arrow -->
<path d="M14.5,7.5h9l4.5,4.5v13h-13.5z" fill="url(#pg)" stroke="#777" stroke-width="1"/><path d="M23.5,7.5v4.5h4.5" fill="#ddd" stroke="#777" stroke-width=".8"/>
<path d="M17,12.5h6M17,15h8.5M17,17.5h8.5M17,20h8.5M19,22.5h6.5" stroke="#3a7adc" stroke-width="1.3"/>
<path d="M9,15Q8,24.3 15.5,24.3V26.4L21.8,22.7L15.5,18.8V21.2Q12.2,21.2 12.4,15.4z" fill="url(#yl)" stroke="#b07c10" stroke-width=".7" stroke-linejoin="round"/>
<!-- 2 doc + red + star -->
<path d="M40.5,7.5h9l4.5,4.5v13h-13.5z" fill="url(#pg)" stroke="#777" stroke-width="1"/><path d="M49.5,7.5v4.5h4.5" fill="#ddd" stroke="#777" stroke-width=".8"/>
<rect x="37.5" y="10" width="8.8" height="4.2" rx=".8" fill="#e83038" stroke="#a81820" stroke-width=".6"/>
<g transform="translate(51.2,21) scale(.86) translate(-50.6,-21)"><path d="M50.6,15.6l1.4,1.8l2.2,-.7l.1,2.3l2.2,.8l-1.3,1.9l1.3,1.9l-2.2,.8l-.1,2.3l-2.2,-.7l-1.4,1.8l-1.4,-1.8l-2.2,.7l-.1,-2.3l-2.2,-.8l1.3,-1.9l-1.3,-1.9l2.2,-.8l.1,-2.3l2.2,.7z" fill="url(#yl)" stroke="#c08c18" stroke-width=".6"/></g>
<!-- 3 doc + pen -->
<path d="M67.5,8.5h9.5l4,4v12.5h-13.5z" fill="url(#pg)" stroke="#777" stroke-width="1"/><path d="M77,8.5v4h4" fill="#ddd" stroke="#777" stroke-width=".8"/>
<path d="M70,13h6M70,15.5h7M70,18h5" stroke="#999" stroke-width=".9"/><path d="M70,23.5q2,-2.5 3,-1t3,-.5" stroke="#444" stroke-width=".8" fill="none"/>
<path d="M82.5,10.5l2.3,1.8l-8.6,10.2l-3.2,1.3l.8,-3.2z" fill="#8ab4e8" stroke="#3c5c94" stroke-width=".8"/>
<!-- 4 floppy -->
<path d="M93.5,8.5h14l3.5,3.5v13h-17.5z" fill="#d0d0d0" stroke="#aaa" stroke-width="1"/><rect x="97" y="9" width="9" height="5.5" fill="#e6e6e6" stroke="#b4b4b4" stroke-width=".6"/><rect x="102.5" y="9.8" width="2" height="3.6" fill="#bbb"/><rect x="96" y="17.5" width="12.5" height="7" fill="#e2e2e2" stroke="#b4b4b4" stroke-width=".6"/><path d="M98,20h8.5M98,22.3h8.5" stroke="#c4c4c4" stroke-width=".8"/>
<!-- 5 printer -->
<rect x="124.5" y="6.5" width="10.5" height="7" fill="#fff" stroke="#888" stroke-width=".8"/>
<path d="M122.5,13h14.5q2,0 2,2v6.5h-18.5v-6.5q0,-2 2,-2z" fill="url(#prb)" stroke="#44608c" stroke-width=".8"/>
<rect x="121" y="17.5" width="17.5" height="2" fill="#3c5888" opacity=".6"/>
<path d="M123.5,20h12.5l1,6h-14.5z" fill="#fff" stroke="#888" stroke-width=".8"/><path d="M125,22.5h9.5M125,24.3h9.5" stroke="#bbb" stroke-width=".7"/>
<!-- 6 envelope -->
<rect x="147.5" y="10.5" width="20" height="13" rx="1" fill="url(#gr)" stroke="#888" stroke-width="1"/><path d="M148,11l9.5,8l9.5,-8M148,23l7,-6.5M167,23l-7,-6.5" fill="none" stroke="#999" stroke-width=".9"/>
<!-- up/down arrows -->
<path d="M197.5,10.5l5.8,6h-3.3v5h-5v-5h-3.3z" fill="#555"/>
<path d="M225.5,22.5l5.8,-6h-3.3v-5h-5v5h-3.3z" fill="#555"/>
<rect x="316.5" y="14.7" width="11.5" height="3.6" rx=".6" fill="#5a5a5a"/>
<path d="M344.5,14.7h4.2v-4h3.6v4h4.2v3.6h-4.2v4h-3.6v-4h-4.2z" fill="#5a5a5a"/>
<path d="M419.5,14.5h6.4l-3.2,3.6z" fill="#444"/>
<!-- fit width -->
<path d="M454.5,8.5v4h13.5v-4" fill="none" stroke="#666" stroke-width="1.2"/>
<path d="M454.5,25v-10h10l3.5,3.5v6.5" fill="#f4f4f4" stroke="#666" stroke-width="1.2"/><path d="M464.5,15v3.5h3.5" fill="#ccc" stroke="#666" stroke-width=".7"/>
<path d="M455.5,23h11.5" stroke="#4a78d0" stroke-width="1"/><path d="M455,23l2.5,-1.8v3.6zM467.5,23l-2.5,-1.8v3.6z" fill="#4a78d0"/>
<!-- fit page -->
<path d="M482.5,8.5h9.5l4,4v12.5h-13.5z" fill="#f4f4f4" stroke="#666" stroke-width="1.2"/><path d="M492,8.5v4h4" fill="#ccc" stroke="#666" stroke-width=".7"/>
<path d="M489,10.5v12.5M484,17.5h10.5" stroke="#4a78d0" stroke-width=".9"/><path d="M489,9.8l1.8,2.4h-3.6zM489,23.8l1.8,-2.4h-3.6zM483.3,17.5l2.4,-1.8v3.6zM495.2,17.5l-2.4,-1.8v3.6z" fill="#4a78d0"/>
<!-- comment -->
<path d="M528,10.5q8.5,0 8.5,5.3t-8,5.3q-1.5,0 -2.5,-.3l-3.5,3v-3.8q-3,-1.5 -3,-4.2q0,-5.3 8.5,-5.3z" fill="#fff08c" stroke="#8c8440" stroke-width=".9"/><path d="M523.5,14.5h9M523.5,16.5h9M523.5,18.5h6" stroke="#b8a850" stroke-width=".8"/>
<!-- highlight -->
<rect x="548.5" y="10.5" width="13.5" height="9.5" rx="1" fill="#f4f4f4" stroke="#666" stroke-width=".9"/><rect x="549.5" y="11.5" width="7.5" height="7.5" fill="#f8e428"/>
<text x="553.2" y="18" font-family="Liberation Sans, sans-serif" font-size="7" font-weight="bold" text-anchor="middle" fill="#222">T</text>
<path d="M563,12.5l1.8,1.6l-7,7.8l-2.6,.8l.6,-2.6z" fill="#ddd" stroke="#555" stroke-width=".8"/><circle cx="553.5" cy="23" r="1.3" fill="#f8e428" stroke="#998a20" stroke-width=".5"/>
<!-- fullscreen -->
<rect x="586" y="6.5" width="20" height="20" fill="url(#gr)" stroke="#7a7a7a" stroke-width="1"/><rect x="587" y="7.5" width="18" height="18" fill="none" stroke="#f6f6f6" stroke-width="1"/>
<path d="M603.5,9.5v6l-2,-2l-3.3,3.3l-2,-2l3.3,-3.3l-2,-2zM588.5,23.5v-6l2,2l3.3,-3.3l2,2l-3.3,3.3l2,2z" fill="#555"/>
<!-- cursor -->
<path d="M-2.5,0.5v17.5l4.2,-3.8l3.3,7.2l2.9,-1.2l-3.3,-7l5.5,0z" fill="#fff" stroke="#111" stroke-width="1.3"/>
<!-- panel header: pages icon -->
<path d="M8,45.5h5v11.5h9.5v2.5h-14.5z" fill="#f4f4f4" stroke="#666" stroke-width="1.1"/>
<path d="M12.5,40.5h9l4,4v12.5h-13z" fill="url(#pg)" stroke="#666" stroke-width="1.1"/><path d="M21.5,40.5v4h4" fill="#e4e4e4" stroke="#666" stroke-width=".7"/>
<!-- collapse buttons -->
<rect x="233.5" y="43.5" width="13" height="13" fill="url(#pg)" stroke="#7a7a7a" stroke-width="1"/><path d="M239.5,46.5v7l-3.8,-3.5zM244,46.5v7l-3.8,-3.5z" fill="#555"/>
<rect x="250.5" y="43.5" width="13" height="13" fill="url(#pg)" stroke="#7a7a7a" stroke-width="1"/><path d="M255.5,46.5v7l3.8,-3.5z" fill="#555"/>
<!-- options button -->
<rect x="40.5" y="73.5" width="12" height="12" rx="1.2" fill="url(#pg)" stroke="#666" stroke-width="1"/>
<circle cx="43.7" cy="77.5" r="1.2" fill="none" stroke="#555" stroke-width=".7"/><circle cx="43.7" cy="81.5" r="1.2" fill="none" stroke="#555" stroke-width=".7"/><path d="M46.2,77.5h4.6M46.2,81.5h4.6" stroke="#555" stroke-width="1"/>
<path d="M54.5,78.5h5l-2.5,3z" fill="#444"/>
<!-- bookmark icon -->
<path d="M8.5,78q0,-1.5 1.5,-1.5h11.5q2,0 2,2v7h-4v-6.5" fill="#9cb8d0" stroke="#7898b4" stroke-width=".6"/>
<path d="M8.5,77.5q0,-1 1.5,-1h8q1.5,0 1.5,1.5v17l-5.5,-4.5l-5.5,4.5z" fill="#b8d0e2" stroke="#88a4bc" stroke-width=".7"/>
<!-- paperclip -->
<path transform="translate(16.2,123.6) rotate(-44)" d="M-7,1.3H7.5A2.6,2.6 0 0 0 7.5,-3.9H-8.8A4,4 0 0 0 -8.8,4.1H9.5" fill="none" stroke="#9e9e9e" stroke-width="1.2" stroke-linecap="round"/>
</svg>

</body>
</html>
